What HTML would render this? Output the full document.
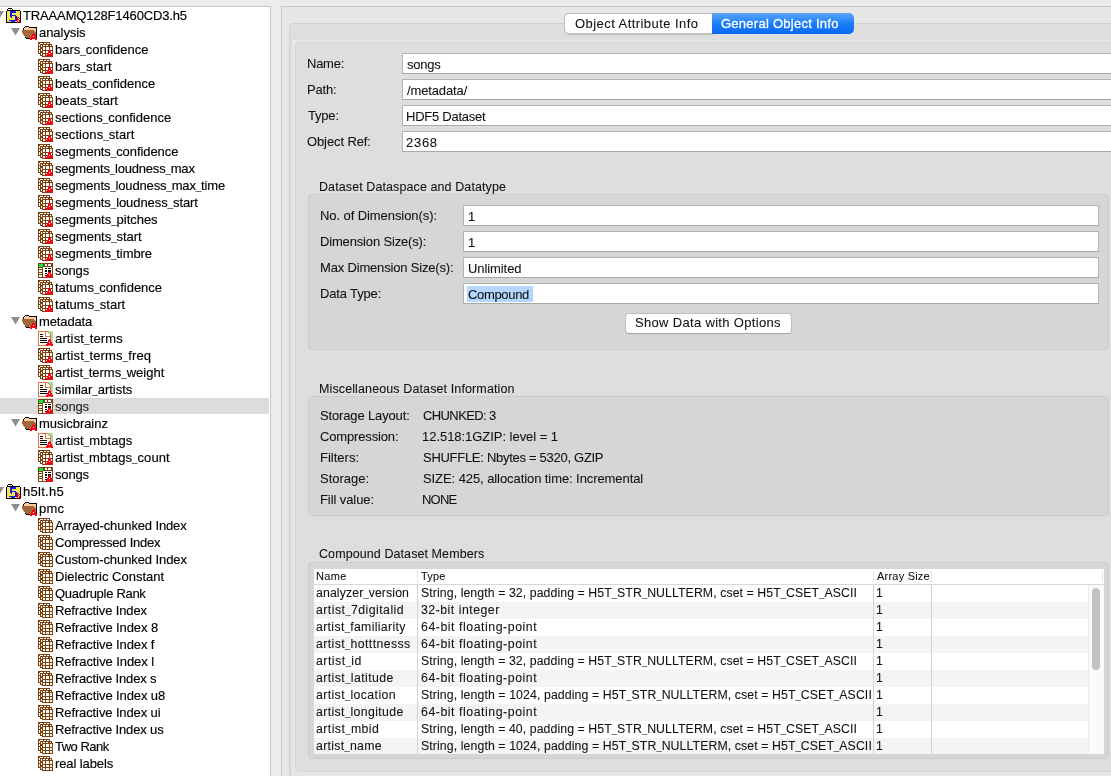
<!DOCTYPE html>
<html><head><meta charset="utf-8"><style>
*{margin:0;padding:0;box-sizing:border-box}
html,body{width:1111px;height:776px;overflow:hidden;background:#ececec;font-family:"Liberation Sans",sans-serif;color:#111;position:relative}
.t{position:absolute;white-space:pre;will-change:transform;-webkit-text-stroke:0.08px currentColor}
.ic{position:absolute}
#tree{position:absolute;left:-1px;top:6px;width:272px;height:800px;background:#fff;border:1px solid #c6c6c6;overflow:hidden}
#tree .t{color:#000;-webkit-text-stroke:0.15px #000}
.sel{position:absolute;left:0;width:269px;height:16px;background:#dcdcdc}
#rp{position:absolute;left:281px;top:6px;width:900px;height:800px;background:#e7e7e7;border:1px solid #c6c6c6}
#tabpane{position:absolute;left:289px;top:23px;width:900px;height:800px;background:#dedede;border:1px solid #d2d2d2;border-radius:4px}
#lite{position:absolute;left:292px;top:40px;width:900px;height:800px;background:#e7e7e7}
#inner{position:absolute;left:295px;top:42px;width:900px;height:730px;background:#dedede;border:1px solid #d5d5d5;border-radius:4px}
#tab1{position:absolute;left:564px;top:13px;width:150px;height:21px;background:#fff;border:1px solid #c0c0c0;border-right:none;border-radius:5px 0 0 5px;box-shadow:0 0.5px 1px rgba(0,0,0,0.12)}
#tab2{position:absolute;left:712px;top:13px;width:142px;height:21px;background:linear-gradient(#5fa5f8,#1a7ef8 50%,#0868f6);border-radius:0 5px 5px 0}
.fld{position:absolute;height:21px;background:#fff;border:1px solid #b4b4b4;border-bottom-color:#a8a8a8}
.grp{position:absolute;background:#d6d6d6;border:1px solid #cbcbcb;border-radius:4px}
#btn{position:absolute;left:625px;top:313px;width:167px;height:21px;background:#fff;border:1px solid #bdbdbd;border-bottom-color:#a4a4a4;border-radius:4px}
#tbl{position:absolute;width:790px;height:185px;background:#fff;overflow:hidden}
</style></head>
<body>
<div id="tree"><div class="sel" style="top:391px"></div><svg class="ic" style="left:5px;top:0px" width="16" height="16" viewBox="0 0 16 16" shape-rendering="crispEdges"><path fill="#000000" d="M3 1h4v1h-4zM2 2h1v1h-1zM7 2h1v1h-1zM2 3h13v1h-13zM1 4h1v1h-1zM15 4h1v1h-1zM1 5h1v1h-1zM15 5h1v1h-1zM1 6h1v1h-1zM15 6h1v1h-1zM1 7h1v1h-1zM15 7h1v1h-1zM1 8h1v1h-1zM15 8h1v1h-1zM1 9h1v1h-1zM15 9h1v1h-1zM1 10h1v1h-1zM15 10h1v1h-1zM1 11h1v1h-1zM15 11h1v1h-1zM1 12h1v1h-1zM15 12h1v1h-1zM1 13h1v1h-1zM15 13h1v1h-1zM1 14h1v1h-1zM15 14h1v1h-1zM1 15h11v1h-11zM13 15h2v1h-2z"/><path fill="#ffffff" d="M3 2h4v1h-4z"/><path fill="#fce24c" d="M2 4h3v1h-3zM11 4h4v1h-4zM2 5h3v1h-3zM11 5h4v1h-4zM2 6h3v1h-3zM7 6h8v1h-8zM2 7h3v1h-3zM7 7h8v1h-8zM2 8h3v1h-3zM11 8h4v1h-4zM2 9h3v1h-3zM7 9h3v1h-3zM12 9h3v1h-3zM2 10h4v1h-4zM7 10h3v1h-3zM14 10h1v1h-1zM2 11h8v1h-8zM13 11h1v1h-1zM2 12h8v1h-8zM14 12h1v1h-1zM2 13h2v1h-2zM13 13h1v1h-1zM2 14h4v1h-4zM10 14h2v1h-2zM13 14h1v1h-1z"/><path fill="#0a1ef0" d="M5 4h6v1h-6zM5 5h6v1h-6zM5 6h2v1h-2zM5 7h2v1h-2zM5 8h6v1h-6zM5 9h2v1h-2zM10 9h2v1h-2zM6 10h1v1h-1zM10 10h2v1h-2zM10 11h2v1h-2zM10 12h2v1h-2zM4 13h8v1h-8zM6 14h4v1h-4z"/><path fill="#ff0014" d="M12 10h2v1h-2zM12 11h1v1h-1zM14 11h1v1h-1zM12 12h2v1h-2zM12 13h1v1h-1zM14 13h1v1h-1zM12 14h1v1h-1zM14 14h1v1h-1zM12 15h1v1h-1zM15 15h1v1h-1z"/></svg><svg class="ic" style="left:-5.0px;top:4px" width="9" height="8" viewBox="0 0 9 8"><path d="M0 0H9L4.5 7.5Z" fill="#8e8e8e"/></svg><svg class="ic" style="left:21px;top:17px" width="16" height="16" viewBox="0 0 16 16" shape-rendering="crispEdges"><path fill="#000000" d="M4 2h4v1h-4zM3 3h1v1h-1zM8 3h8v1h-8zM2 4h1v1h-1zM15 4h1v1h-1zM2 5h1v1h-1zM15 5h1v1h-1zM15 6h1v1h-1zM15 7h1v1h-1zM15 8h1v1h-1zM15 9h1v1h-1zM15 10h1v1h-1zM15 11h1v1h-1zM15 12h1v1h-1zM4 13h1v1h-1zM15 13h1v1h-1zM5 14h4v1h-4z"/><path fill="#fccc9c" d="M4 3h4v1h-4zM3 4h12v1h-12zM3 5h12v1h-12zM13 6h2v1h-2zM14 7h1v1h-1z"/><path fill="#a4673c" d="M1 6h12v1h-12zM1 7h13v1h-13zM1 8h14v1h-14zM2 9h10v1h-10zM13 9h2v1h-2zM2 10h9v1h-9zM14 10h1v1h-1zM3 11h8v1h-8zM14 11h1v1h-1zM4 12h6v1h-6zM5 13h5v1h-5z"/><path fill="#ff0014" d="M12 9h1v1h-1zM11 10h3v1h-3zM11 11h3v1h-3zM10 12h2v1h-2zM13 12h2v1h-2zM10 13h5v1h-5zM9 14h7v1h-7zM9 15h2v1h-2zM14 15h2v1h-2z"/><path fill="#ffffff" d="M12 12h1v1h-1z"/></svg><svg class="ic" style="left:11.0px;top:21px" width="9" height="8" viewBox="0 0 9 8"><path d="M0 0H9L4.5 7.5Z" fill="#8e8e8e"/></svg><svg class="ic" style="left:37px;top:34px" width="16" height="16" viewBox="0 0 16 16" shape-rendering="crispEdges"><path fill="#7b4210" d="M1 1h12v1h-12zM1 2h2v1h-2zM6 2h1v1h-1zM9 2h1v1h-1zM12 2h1v1h-1zM1 3h1v1h-1zM3 3h12v1h-12zM1 4h1v1h-1zM3 4h1v1h-1zM5 4h1v1h-1zM8 4h1v1h-1zM11 4h2v1h-2zM14 4h1v1h-1zM1 5h3v1h-3zM5 5h11v1h-11zM1 6h1v1h-1zM3 6h3v1h-3zM8 6h1v1h-1zM12 6h1v1h-1zM15 6h1v1h-1zM1 7h1v1h-1zM3 7h3v1h-3zM8 7h1v1h-1zM12 7h1v1h-1zM15 7h1v1h-1zM1 8h3v1h-3zM5 8h1v1h-1zM8 8h1v1h-1zM12 8h1v1h-1zM15 8h1v1h-1zM1 9h1v1h-1zM3 9h1v1h-1zM5 9h7v1h-7zM13 9h3v1h-3zM1 10h1v1h-1zM3 10h3v1h-3zM8 10h1v1h-1zM15 10h1v1h-1zM1 11h1v1h-1zM3 11h3v1h-3zM8 11h1v1h-1zM15 11h1v1h-1zM1 12h3v1h-3zM5 12h5v1h-5zM15 12h1v1h-1zM3 13h1v1h-1zM5 13h1v1h-1zM8 13h1v1h-1zM15 13h1v1h-1zM3 14h3v1h-3zM8 14h1v1h-1zM5 15h4v1h-4zM11 15h3v1h-3z"/><path fill="#ffffff" d="M3 2h3v1h-3zM7 2h2v1h-2zM10 2h2v1h-2zM2 3h1v1h-1zM2 4h1v1h-1zM4 4h1v1h-1zM6 4h2v1h-2zM9 4h2v1h-2zM13 4h1v1h-1zM4 5h1v1h-1zM2 6h1v1h-1zM6 6h2v1h-2zM9 6h3v1h-3zM13 6h2v1h-2zM2 7h1v1h-1zM6 7h2v1h-2zM9 7h3v1h-3zM13 7h2v1h-2zM4 8h1v1h-1zM6 8h2v1h-2zM9 8h3v1h-3zM13 8h2v1h-2zM2 9h1v1h-1zM4 9h1v1h-1zM2 10h1v1h-1zM6 10h2v1h-2zM9 10h2v1h-2zM14 10h1v1h-1zM2 11h1v1h-1zM6 11h2v1h-2zM9 11h2v1h-2zM14 11h1v1h-1zM4 12h1v1h-1zM12 12h1v1h-1zM4 13h1v1h-1zM6 13h2v1h-2zM9 13h1v1h-1zM6 14h2v1h-2z"/><path fill="#ff0014" d="M12 9h1v1h-1zM11 10h3v1h-3zM11 11h3v1h-3zM10 12h2v1h-2zM13 12h2v1h-2zM10 13h5v1h-5zM9 14h7v1h-7zM9 15h2v1h-2zM14 15h2v1h-2z"/></svg><svg class="ic" style="left:37px;top:51px" width="16" height="16" viewBox="0 0 16 16" shape-rendering="crispEdges"><path fill="#7b4210" d="M1 1h12v1h-12zM1 2h2v1h-2zM6 2h1v1h-1zM9 2h1v1h-1zM12 2h1v1h-1zM1 3h1v1h-1zM3 3h12v1h-12zM1 4h1v1h-1zM3 4h1v1h-1zM5 4h1v1h-1zM8 4h1v1h-1zM11 4h2v1h-2zM14 4h1v1h-1zM1 5h3v1h-3zM5 5h11v1h-11zM1 6h1v1h-1zM3 6h3v1h-3zM8 6h1v1h-1zM12 6h1v1h-1zM15 6h1v1h-1zM1 7h1v1h-1zM3 7h3v1h-3zM8 7h1v1h-1zM12 7h1v1h-1zM15 7h1v1h-1zM1 8h3v1h-3zM5 8h1v1h-1zM8 8h1v1h-1zM12 8h1v1h-1zM15 8h1v1h-1zM1 9h1v1h-1zM3 9h1v1h-1zM5 9h7v1h-7zM13 9h3v1h-3zM1 10h1v1h-1zM3 10h3v1h-3zM8 10h1v1h-1zM15 10h1v1h-1zM1 11h1v1h-1zM3 11h3v1h-3zM8 11h1v1h-1zM15 11h1v1h-1zM1 12h3v1h-3zM5 12h5v1h-5zM15 12h1v1h-1zM3 13h1v1h-1zM5 13h1v1h-1zM8 13h1v1h-1zM15 13h1v1h-1zM3 14h3v1h-3zM8 14h1v1h-1zM5 15h4v1h-4zM11 15h3v1h-3z"/><path fill="#ffffff" d="M3 2h3v1h-3zM7 2h2v1h-2zM10 2h2v1h-2zM2 3h1v1h-1zM2 4h1v1h-1zM4 4h1v1h-1zM6 4h2v1h-2zM9 4h2v1h-2zM13 4h1v1h-1zM4 5h1v1h-1zM2 6h1v1h-1zM6 6h2v1h-2zM9 6h3v1h-3zM13 6h2v1h-2zM2 7h1v1h-1zM6 7h2v1h-2zM9 7h3v1h-3zM13 7h2v1h-2zM4 8h1v1h-1zM6 8h2v1h-2zM9 8h3v1h-3zM13 8h2v1h-2zM2 9h1v1h-1zM4 9h1v1h-1zM2 10h1v1h-1zM6 10h2v1h-2zM9 10h2v1h-2zM14 10h1v1h-1zM2 11h1v1h-1zM6 11h2v1h-2zM9 11h2v1h-2zM14 11h1v1h-1zM4 12h1v1h-1zM12 12h1v1h-1zM4 13h1v1h-1zM6 13h2v1h-2zM9 13h1v1h-1zM6 14h2v1h-2z"/><path fill="#ff0014" d="M12 9h1v1h-1zM11 10h3v1h-3zM11 11h3v1h-3zM10 12h2v1h-2zM13 12h2v1h-2zM10 13h5v1h-5zM9 14h7v1h-7zM9 15h2v1h-2zM14 15h2v1h-2z"/></svg><svg class="ic" style="left:37px;top:68px" width="16" height="16" viewBox="0 0 16 16" shape-rendering="crispEdges"><path fill="#7b4210" d="M1 1h12v1h-12zM1 2h2v1h-2zM6 2h1v1h-1zM9 2h1v1h-1zM12 2h1v1h-1zM1 3h1v1h-1zM3 3h12v1h-12zM1 4h1v1h-1zM3 4h1v1h-1zM5 4h1v1h-1zM8 4h1v1h-1zM11 4h2v1h-2zM14 4h1v1h-1zM1 5h3v1h-3zM5 5h11v1h-11zM1 6h1v1h-1zM3 6h3v1h-3zM8 6h1v1h-1zM12 6h1v1h-1zM15 6h1v1h-1zM1 7h1v1h-1zM3 7h3v1h-3zM8 7h1v1h-1zM12 7h1v1h-1zM15 7h1v1h-1zM1 8h3v1h-3zM5 8h1v1h-1zM8 8h1v1h-1zM12 8h1v1h-1zM15 8h1v1h-1zM1 9h1v1h-1zM3 9h1v1h-1zM5 9h7v1h-7zM13 9h3v1h-3zM1 10h1v1h-1zM3 10h3v1h-3zM8 10h1v1h-1zM15 10h1v1h-1zM1 11h1v1h-1zM3 11h3v1h-3zM8 11h1v1h-1zM15 11h1v1h-1zM1 12h3v1h-3zM5 12h5v1h-5zM15 12h1v1h-1zM3 13h1v1h-1zM5 13h1v1h-1zM8 13h1v1h-1zM15 13h1v1h-1zM3 14h3v1h-3zM8 14h1v1h-1zM5 15h4v1h-4zM11 15h3v1h-3z"/><path fill="#ffffff" d="M3 2h3v1h-3zM7 2h2v1h-2zM10 2h2v1h-2zM2 3h1v1h-1zM2 4h1v1h-1zM4 4h1v1h-1zM6 4h2v1h-2zM9 4h2v1h-2zM13 4h1v1h-1zM4 5h1v1h-1zM2 6h1v1h-1zM6 6h2v1h-2zM9 6h3v1h-3zM13 6h2v1h-2zM2 7h1v1h-1zM6 7h2v1h-2zM9 7h3v1h-3zM13 7h2v1h-2zM4 8h1v1h-1zM6 8h2v1h-2zM9 8h3v1h-3zM13 8h2v1h-2zM2 9h1v1h-1zM4 9h1v1h-1zM2 10h1v1h-1zM6 10h2v1h-2zM9 10h2v1h-2zM14 10h1v1h-1zM2 11h1v1h-1zM6 11h2v1h-2zM9 11h2v1h-2zM14 11h1v1h-1zM4 12h1v1h-1zM12 12h1v1h-1zM4 13h1v1h-1zM6 13h2v1h-2zM9 13h1v1h-1zM6 14h2v1h-2z"/><path fill="#ff0014" d="M12 9h1v1h-1zM11 10h3v1h-3zM11 11h3v1h-3zM10 12h2v1h-2zM13 12h2v1h-2zM10 13h5v1h-5zM9 14h7v1h-7zM9 15h2v1h-2zM14 15h2v1h-2z"/></svg><svg class="ic" style="left:37px;top:85px" width="16" height="16" viewBox="0 0 16 16" shape-rendering="crispEdges"><path fill="#7b4210" d="M1 1h12v1h-12zM1 2h2v1h-2zM6 2h1v1h-1zM9 2h1v1h-1zM12 2h1v1h-1zM1 3h1v1h-1zM3 3h12v1h-12zM1 4h1v1h-1zM3 4h1v1h-1zM5 4h1v1h-1zM8 4h1v1h-1zM11 4h2v1h-2zM14 4h1v1h-1zM1 5h3v1h-3zM5 5h11v1h-11zM1 6h1v1h-1zM3 6h3v1h-3zM8 6h1v1h-1zM12 6h1v1h-1zM15 6h1v1h-1zM1 7h1v1h-1zM3 7h3v1h-3zM8 7h1v1h-1zM12 7h1v1h-1zM15 7h1v1h-1zM1 8h3v1h-3zM5 8h1v1h-1zM8 8h1v1h-1zM12 8h1v1h-1zM15 8h1v1h-1zM1 9h1v1h-1zM3 9h1v1h-1zM5 9h7v1h-7zM13 9h3v1h-3zM1 10h1v1h-1zM3 10h3v1h-3zM8 10h1v1h-1zM15 10h1v1h-1zM1 11h1v1h-1zM3 11h3v1h-3zM8 11h1v1h-1zM15 11h1v1h-1zM1 12h3v1h-3zM5 12h5v1h-5zM15 12h1v1h-1zM3 13h1v1h-1zM5 13h1v1h-1zM8 13h1v1h-1zM15 13h1v1h-1zM3 14h3v1h-3zM8 14h1v1h-1zM5 15h4v1h-4zM11 15h3v1h-3z"/><path fill="#ffffff" d="M3 2h3v1h-3zM7 2h2v1h-2zM10 2h2v1h-2zM2 3h1v1h-1zM2 4h1v1h-1zM4 4h1v1h-1zM6 4h2v1h-2zM9 4h2v1h-2zM13 4h1v1h-1zM4 5h1v1h-1zM2 6h1v1h-1zM6 6h2v1h-2zM9 6h3v1h-3zM13 6h2v1h-2zM2 7h1v1h-1zM6 7h2v1h-2zM9 7h3v1h-3zM13 7h2v1h-2zM4 8h1v1h-1zM6 8h2v1h-2zM9 8h3v1h-3zM13 8h2v1h-2zM2 9h1v1h-1zM4 9h1v1h-1zM2 10h1v1h-1zM6 10h2v1h-2zM9 10h2v1h-2zM14 10h1v1h-1zM2 11h1v1h-1zM6 11h2v1h-2zM9 11h2v1h-2zM14 11h1v1h-1zM4 12h1v1h-1zM12 12h1v1h-1zM4 13h1v1h-1zM6 13h2v1h-2zM9 13h1v1h-1zM6 14h2v1h-2z"/><path fill="#ff0014" d="M12 9h1v1h-1zM11 10h3v1h-3zM11 11h3v1h-3zM10 12h2v1h-2zM13 12h2v1h-2zM10 13h5v1h-5zM9 14h7v1h-7zM9 15h2v1h-2zM14 15h2v1h-2z"/></svg><svg class="ic" style="left:37px;top:102px" width="16" height="16" viewBox="0 0 16 16" shape-rendering="crispEdges"><path fill="#7b4210" d="M1 1h12v1h-12zM1 2h2v1h-2zM6 2h1v1h-1zM9 2h1v1h-1zM12 2h1v1h-1zM1 3h1v1h-1zM3 3h12v1h-12zM1 4h1v1h-1zM3 4h1v1h-1zM5 4h1v1h-1zM8 4h1v1h-1zM11 4h2v1h-2zM14 4h1v1h-1zM1 5h3v1h-3zM5 5h11v1h-11zM1 6h1v1h-1zM3 6h3v1h-3zM8 6h1v1h-1zM12 6h1v1h-1zM15 6h1v1h-1zM1 7h1v1h-1zM3 7h3v1h-3zM8 7h1v1h-1zM12 7h1v1h-1zM15 7h1v1h-1zM1 8h3v1h-3zM5 8h1v1h-1zM8 8h1v1h-1zM12 8h1v1h-1zM15 8h1v1h-1zM1 9h1v1h-1zM3 9h1v1h-1zM5 9h7v1h-7zM13 9h3v1h-3zM1 10h1v1h-1zM3 10h3v1h-3zM8 10h1v1h-1zM15 10h1v1h-1zM1 11h1v1h-1zM3 11h3v1h-3zM8 11h1v1h-1zM15 11h1v1h-1zM1 12h3v1h-3zM5 12h5v1h-5zM15 12h1v1h-1zM3 13h1v1h-1zM5 13h1v1h-1zM8 13h1v1h-1zM15 13h1v1h-1zM3 14h3v1h-3zM8 14h1v1h-1zM5 15h4v1h-4zM11 15h3v1h-3z"/><path fill="#ffffff" d="M3 2h3v1h-3zM7 2h2v1h-2zM10 2h2v1h-2zM2 3h1v1h-1zM2 4h1v1h-1zM4 4h1v1h-1zM6 4h2v1h-2zM9 4h2v1h-2zM13 4h1v1h-1zM4 5h1v1h-1zM2 6h1v1h-1zM6 6h2v1h-2zM9 6h3v1h-3zM13 6h2v1h-2zM2 7h1v1h-1zM6 7h2v1h-2zM9 7h3v1h-3zM13 7h2v1h-2zM4 8h1v1h-1zM6 8h2v1h-2zM9 8h3v1h-3zM13 8h2v1h-2zM2 9h1v1h-1zM4 9h1v1h-1zM2 10h1v1h-1zM6 10h2v1h-2zM9 10h2v1h-2zM14 10h1v1h-1zM2 11h1v1h-1zM6 11h2v1h-2zM9 11h2v1h-2zM14 11h1v1h-1zM4 12h1v1h-1zM12 12h1v1h-1zM4 13h1v1h-1zM6 13h2v1h-2zM9 13h1v1h-1zM6 14h2v1h-2z"/><path fill="#ff0014" d="M12 9h1v1h-1zM11 10h3v1h-3zM11 11h3v1h-3zM10 12h2v1h-2zM13 12h2v1h-2zM10 13h5v1h-5zM9 14h7v1h-7zM9 15h2v1h-2zM14 15h2v1h-2z"/></svg><svg class="ic" style="left:37px;top:119px" width="16" height="16" viewBox="0 0 16 16" shape-rendering="crispEdges"><path fill="#7b4210" d="M1 1h12v1h-12zM1 2h2v1h-2zM6 2h1v1h-1zM9 2h1v1h-1zM12 2h1v1h-1zM1 3h1v1h-1zM3 3h12v1h-12zM1 4h1v1h-1zM3 4h1v1h-1zM5 4h1v1h-1zM8 4h1v1h-1zM11 4h2v1h-2zM14 4h1v1h-1zM1 5h3v1h-3zM5 5h11v1h-11zM1 6h1v1h-1zM3 6h3v1h-3zM8 6h1v1h-1zM12 6h1v1h-1zM15 6h1v1h-1zM1 7h1v1h-1zM3 7h3v1h-3zM8 7h1v1h-1zM12 7h1v1h-1zM15 7h1v1h-1zM1 8h3v1h-3zM5 8h1v1h-1zM8 8h1v1h-1zM12 8h1v1h-1zM15 8h1v1h-1zM1 9h1v1h-1zM3 9h1v1h-1zM5 9h7v1h-7zM13 9h3v1h-3zM1 10h1v1h-1zM3 10h3v1h-3zM8 10h1v1h-1zM15 10h1v1h-1zM1 11h1v1h-1zM3 11h3v1h-3zM8 11h1v1h-1zM15 11h1v1h-1zM1 12h3v1h-3zM5 12h5v1h-5zM15 12h1v1h-1zM3 13h1v1h-1zM5 13h1v1h-1zM8 13h1v1h-1zM15 13h1v1h-1zM3 14h3v1h-3zM8 14h1v1h-1zM5 15h4v1h-4zM11 15h3v1h-3z"/><path fill="#ffffff" d="M3 2h3v1h-3zM7 2h2v1h-2zM10 2h2v1h-2zM2 3h1v1h-1zM2 4h1v1h-1zM4 4h1v1h-1zM6 4h2v1h-2zM9 4h2v1h-2zM13 4h1v1h-1zM4 5h1v1h-1zM2 6h1v1h-1zM6 6h2v1h-2zM9 6h3v1h-3zM13 6h2v1h-2zM2 7h1v1h-1zM6 7h2v1h-2zM9 7h3v1h-3zM13 7h2v1h-2zM4 8h1v1h-1zM6 8h2v1h-2zM9 8h3v1h-3zM13 8h2v1h-2zM2 9h1v1h-1zM4 9h1v1h-1zM2 10h1v1h-1zM6 10h2v1h-2zM9 10h2v1h-2zM14 10h1v1h-1zM2 11h1v1h-1zM6 11h2v1h-2zM9 11h2v1h-2zM14 11h1v1h-1zM4 12h1v1h-1zM12 12h1v1h-1zM4 13h1v1h-1zM6 13h2v1h-2zM9 13h1v1h-1zM6 14h2v1h-2z"/><path fill="#ff0014" d="M12 9h1v1h-1zM11 10h3v1h-3zM11 11h3v1h-3zM10 12h2v1h-2zM13 12h2v1h-2zM10 13h5v1h-5zM9 14h7v1h-7zM9 15h2v1h-2zM14 15h2v1h-2z"/></svg><svg class="ic" style="left:37px;top:136px" width="16" height="16" viewBox="0 0 16 16" shape-rendering="crispEdges"><path fill="#7b4210" d="M1 1h12v1h-12zM1 2h2v1h-2zM6 2h1v1h-1zM9 2h1v1h-1zM12 2h1v1h-1zM1 3h1v1h-1zM3 3h12v1h-12zM1 4h1v1h-1zM3 4h1v1h-1zM5 4h1v1h-1zM8 4h1v1h-1zM11 4h2v1h-2zM14 4h1v1h-1zM1 5h3v1h-3zM5 5h11v1h-11zM1 6h1v1h-1zM3 6h3v1h-3zM8 6h1v1h-1zM12 6h1v1h-1zM15 6h1v1h-1zM1 7h1v1h-1zM3 7h3v1h-3zM8 7h1v1h-1zM12 7h1v1h-1zM15 7h1v1h-1zM1 8h3v1h-3zM5 8h1v1h-1zM8 8h1v1h-1zM12 8h1v1h-1zM15 8h1v1h-1zM1 9h1v1h-1zM3 9h1v1h-1zM5 9h7v1h-7zM13 9h3v1h-3zM1 10h1v1h-1zM3 10h3v1h-3zM8 10h1v1h-1zM15 10h1v1h-1zM1 11h1v1h-1zM3 11h3v1h-3zM8 11h1v1h-1zM15 11h1v1h-1zM1 12h3v1h-3zM5 12h5v1h-5zM15 12h1v1h-1zM3 13h1v1h-1zM5 13h1v1h-1zM8 13h1v1h-1zM15 13h1v1h-1zM3 14h3v1h-3zM8 14h1v1h-1zM5 15h4v1h-4zM11 15h3v1h-3z"/><path fill="#ffffff" d="M3 2h3v1h-3zM7 2h2v1h-2zM10 2h2v1h-2zM2 3h1v1h-1zM2 4h1v1h-1zM4 4h1v1h-1zM6 4h2v1h-2zM9 4h2v1h-2zM13 4h1v1h-1zM4 5h1v1h-1zM2 6h1v1h-1zM6 6h2v1h-2zM9 6h3v1h-3zM13 6h2v1h-2zM2 7h1v1h-1zM6 7h2v1h-2zM9 7h3v1h-3zM13 7h2v1h-2zM4 8h1v1h-1zM6 8h2v1h-2zM9 8h3v1h-3zM13 8h2v1h-2zM2 9h1v1h-1zM4 9h1v1h-1zM2 10h1v1h-1zM6 10h2v1h-2zM9 10h2v1h-2zM14 10h1v1h-1zM2 11h1v1h-1zM6 11h2v1h-2zM9 11h2v1h-2zM14 11h1v1h-1zM4 12h1v1h-1zM12 12h1v1h-1zM4 13h1v1h-1zM6 13h2v1h-2zM9 13h1v1h-1zM6 14h2v1h-2z"/><path fill="#ff0014" d="M12 9h1v1h-1zM11 10h3v1h-3zM11 11h3v1h-3zM10 12h2v1h-2zM13 12h2v1h-2zM10 13h5v1h-5zM9 14h7v1h-7zM9 15h2v1h-2zM14 15h2v1h-2z"/></svg><svg class="ic" style="left:37px;top:153px" width="16" height="16" viewBox="0 0 16 16" shape-rendering="crispEdges"><path fill="#7b4210" d="M1 1h12v1h-12zM1 2h2v1h-2zM6 2h1v1h-1zM9 2h1v1h-1zM12 2h1v1h-1zM1 3h1v1h-1zM3 3h12v1h-12zM1 4h1v1h-1zM3 4h1v1h-1zM5 4h1v1h-1zM8 4h1v1h-1zM11 4h2v1h-2zM14 4h1v1h-1zM1 5h3v1h-3zM5 5h11v1h-11zM1 6h1v1h-1zM3 6h3v1h-3zM8 6h1v1h-1zM12 6h1v1h-1zM15 6h1v1h-1zM1 7h1v1h-1zM3 7h3v1h-3zM8 7h1v1h-1zM12 7h1v1h-1zM15 7h1v1h-1zM1 8h3v1h-3zM5 8h1v1h-1zM8 8h1v1h-1zM12 8h1v1h-1zM15 8h1v1h-1zM1 9h1v1h-1zM3 9h1v1h-1zM5 9h7v1h-7zM13 9h3v1h-3zM1 10h1v1h-1zM3 10h3v1h-3zM8 10h1v1h-1zM15 10h1v1h-1zM1 11h1v1h-1zM3 11h3v1h-3zM8 11h1v1h-1zM15 11h1v1h-1zM1 12h3v1h-3zM5 12h5v1h-5zM15 12h1v1h-1zM3 13h1v1h-1zM5 13h1v1h-1zM8 13h1v1h-1zM15 13h1v1h-1zM3 14h3v1h-3zM8 14h1v1h-1zM5 15h4v1h-4zM11 15h3v1h-3z"/><path fill="#ffffff" d="M3 2h3v1h-3zM7 2h2v1h-2zM10 2h2v1h-2zM2 3h1v1h-1zM2 4h1v1h-1zM4 4h1v1h-1zM6 4h2v1h-2zM9 4h2v1h-2zM13 4h1v1h-1zM4 5h1v1h-1zM2 6h1v1h-1zM6 6h2v1h-2zM9 6h3v1h-3zM13 6h2v1h-2zM2 7h1v1h-1zM6 7h2v1h-2zM9 7h3v1h-3zM13 7h2v1h-2zM4 8h1v1h-1zM6 8h2v1h-2zM9 8h3v1h-3zM13 8h2v1h-2zM2 9h1v1h-1zM4 9h1v1h-1zM2 10h1v1h-1zM6 10h2v1h-2zM9 10h2v1h-2zM14 10h1v1h-1zM2 11h1v1h-1zM6 11h2v1h-2zM9 11h2v1h-2zM14 11h1v1h-1zM4 12h1v1h-1zM12 12h1v1h-1zM4 13h1v1h-1zM6 13h2v1h-2zM9 13h1v1h-1zM6 14h2v1h-2z"/><path fill="#ff0014" d="M12 9h1v1h-1zM11 10h3v1h-3zM11 11h3v1h-3zM10 12h2v1h-2zM13 12h2v1h-2zM10 13h5v1h-5zM9 14h7v1h-7zM9 15h2v1h-2zM14 15h2v1h-2z"/></svg><svg class="ic" style="left:37px;top:170px" width="16" height="16" viewBox="0 0 16 16" shape-rendering="crispEdges"><path fill="#7b4210" d="M1 1h12v1h-12zM1 2h2v1h-2zM6 2h1v1h-1zM9 2h1v1h-1zM12 2h1v1h-1zM1 3h1v1h-1zM3 3h12v1h-12zM1 4h1v1h-1zM3 4h1v1h-1zM5 4h1v1h-1zM8 4h1v1h-1zM11 4h2v1h-2zM14 4h1v1h-1zM1 5h3v1h-3zM5 5h11v1h-11zM1 6h1v1h-1zM3 6h3v1h-3zM8 6h1v1h-1zM12 6h1v1h-1zM15 6h1v1h-1zM1 7h1v1h-1zM3 7h3v1h-3zM8 7h1v1h-1zM12 7h1v1h-1zM15 7h1v1h-1zM1 8h3v1h-3zM5 8h1v1h-1zM8 8h1v1h-1zM12 8h1v1h-1zM15 8h1v1h-1zM1 9h1v1h-1zM3 9h1v1h-1zM5 9h7v1h-7zM13 9h3v1h-3zM1 10h1v1h-1zM3 10h3v1h-3zM8 10h1v1h-1zM15 10h1v1h-1zM1 11h1v1h-1zM3 11h3v1h-3zM8 11h1v1h-1zM15 11h1v1h-1zM1 12h3v1h-3zM5 12h5v1h-5zM15 12h1v1h-1zM3 13h1v1h-1zM5 13h1v1h-1zM8 13h1v1h-1zM15 13h1v1h-1zM3 14h3v1h-3zM8 14h1v1h-1zM5 15h4v1h-4zM11 15h3v1h-3z"/><path fill="#ffffff" d="M3 2h3v1h-3zM7 2h2v1h-2zM10 2h2v1h-2zM2 3h1v1h-1zM2 4h1v1h-1zM4 4h1v1h-1zM6 4h2v1h-2zM9 4h2v1h-2zM13 4h1v1h-1zM4 5h1v1h-1zM2 6h1v1h-1zM6 6h2v1h-2zM9 6h3v1h-3zM13 6h2v1h-2zM2 7h1v1h-1zM6 7h2v1h-2zM9 7h3v1h-3zM13 7h2v1h-2zM4 8h1v1h-1zM6 8h2v1h-2zM9 8h3v1h-3zM13 8h2v1h-2zM2 9h1v1h-1zM4 9h1v1h-1zM2 10h1v1h-1zM6 10h2v1h-2zM9 10h2v1h-2zM14 10h1v1h-1zM2 11h1v1h-1zM6 11h2v1h-2zM9 11h2v1h-2zM14 11h1v1h-1zM4 12h1v1h-1zM12 12h1v1h-1zM4 13h1v1h-1zM6 13h2v1h-2zM9 13h1v1h-1zM6 14h2v1h-2z"/><path fill="#ff0014" d="M12 9h1v1h-1zM11 10h3v1h-3zM11 11h3v1h-3zM10 12h2v1h-2zM13 12h2v1h-2zM10 13h5v1h-5zM9 14h7v1h-7zM9 15h2v1h-2zM14 15h2v1h-2z"/></svg><svg class="ic" style="left:37px;top:187px" width="16" height="16" viewBox="0 0 16 16" shape-rendering="crispEdges"><path fill="#7b4210" d="M1 1h12v1h-12zM1 2h2v1h-2zM6 2h1v1h-1zM9 2h1v1h-1zM12 2h1v1h-1zM1 3h1v1h-1zM3 3h12v1h-12zM1 4h1v1h-1zM3 4h1v1h-1zM5 4h1v1h-1zM8 4h1v1h-1zM11 4h2v1h-2zM14 4h1v1h-1zM1 5h3v1h-3zM5 5h11v1h-11zM1 6h1v1h-1zM3 6h3v1h-3zM8 6h1v1h-1zM12 6h1v1h-1zM15 6h1v1h-1zM1 7h1v1h-1zM3 7h3v1h-3zM8 7h1v1h-1zM12 7h1v1h-1zM15 7h1v1h-1zM1 8h3v1h-3zM5 8h1v1h-1zM8 8h1v1h-1zM12 8h1v1h-1zM15 8h1v1h-1zM1 9h1v1h-1zM3 9h1v1h-1zM5 9h7v1h-7zM13 9h3v1h-3zM1 10h1v1h-1zM3 10h3v1h-3zM8 10h1v1h-1zM15 10h1v1h-1zM1 11h1v1h-1zM3 11h3v1h-3zM8 11h1v1h-1zM15 11h1v1h-1zM1 12h3v1h-3zM5 12h5v1h-5zM15 12h1v1h-1zM3 13h1v1h-1zM5 13h1v1h-1zM8 13h1v1h-1zM15 13h1v1h-1zM3 14h3v1h-3zM8 14h1v1h-1zM5 15h4v1h-4zM11 15h3v1h-3z"/><path fill="#ffffff" d="M3 2h3v1h-3zM7 2h2v1h-2zM10 2h2v1h-2zM2 3h1v1h-1zM2 4h1v1h-1zM4 4h1v1h-1zM6 4h2v1h-2zM9 4h2v1h-2zM13 4h1v1h-1zM4 5h1v1h-1zM2 6h1v1h-1zM6 6h2v1h-2zM9 6h3v1h-3zM13 6h2v1h-2zM2 7h1v1h-1zM6 7h2v1h-2zM9 7h3v1h-3zM13 7h2v1h-2zM4 8h1v1h-1zM6 8h2v1h-2zM9 8h3v1h-3zM13 8h2v1h-2zM2 9h1v1h-1zM4 9h1v1h-1zM2 10h1v1h-1zM6 10h2v1h-2zM9 10h2v1h-2zM14 10h1v1h-1zM2 11h1v1h-1zM6 11h2v1h-2zM9 11h2v1h-2zM14 11h1v1h-1zM4 12h1v1h-1zM12 12h1v1h-1zM4 13h1v1h-1zM6 13h2v1h-2zM9 13h1v1h-1zM6 14h2v1h-2z"/><path fill="#ff0014" d="M12 9h1v1h-1zM11 10h3v1h-3zM11 11h3v1h-3zM10 12h2v1h-2zM13 12h2v1h-2zM10 13h5v1h-5zM9 14h7v1h-7zM9 15h2v1h-2zM14 15h2v1h-2z"/></svg><svg class="ic" style="left:37px;top:204px" width="16" height="16" viewBox="0 0 16 16" shape-rendering="crispEdges"><path fill="#7b4210" d="M1 1h12v1h-12zM1 2h2v1h-2zM6 2h1v1h-1zM9 2h1v1h-1zM12 2h1v1h-1zM1 3h1v1h-1zM3 3h12v1h-12zM1 4h1v1h-1zM3 4h1v1h-1zM5 4h1v1h-1zM8 4h1v1h-1zM11 4h2v1h-2zM14 4h1v1h-1zM1 5h3v1h-3zM5 5h11v1h-11zM1 6h1v1h-1zM3 6h3v1h-3zM8 6h1v1h-1zM12 6h1v1h-1zM15 6h1v1h-1zM1 7h1v1h-1zM3 7h3v1h-3zM8 7h1v1h-1zM12 7h1v1h-1zM15 7h1v1h-1zM1 8h3v1h-3zM5 8h1v1h-1zM8 8h1v1h-1zM12 8h1v1h-1zM15 8h1v1h-1zM1 9h1v1h-1zM3 9h1v1h-1zM5 9h7v1h-7zM13 9h3v1h-3zM1 10h1v1h-1zM3 10h3v1h-3zM8 10h1v1h-1zM15 10h1v1h-1zM1 11h1v1h-1zM3 11h3v1h-3zM8 11h1v1h-1zM15 11h1v1h-1zM1 12h3v1h-3zM5 12h5v1h-5zM15 12h1v1h-1zM3 13h1v1h-1zM5 13h1v1h-1zM8 13h1v1h-1zM15 13h1v1h-1zM3 14h3v1h-3zM8 14h1v1h-1zM5 15h4v1h-4zM11 15h3v1h-3z"/><path fill="#ffffff" d="M3 2h3v1h-3zM7 2h2v1h-2zM10 2h2v1h-2zM2 3h1v1h-1zM2 4h1v1h-1zM4 4h1v1h-1zM6 4h2v1h-2zM9 4h2v1h-2zM13 4h1v1h-1zM4 5h1v1h-1zM2 6h1v1h-1zM6 6h2v1h-2zM9 6h3v1h-3zM13 6h2v1h-2zM2 7h1v1h-1zM6 7h2v1h-2zM9 7h3v1h-3zM13 7h2v1h-2zM4 8h1v1h-1zM6 8h2v1h-2zM9 8h3v1h-3zM13 8h2v1h-2zM2 9h1v1h-1zM4 9h1v1h-1zM2 10h1v1h-1zM6 10h2v1h-2zM9 10h2v1h-2zM14 10h1v1h-1zM2 11h1v1h-1zM6 11h2v1h-2zM9 11h2v1h-2zM14 11h1v1h-1zM4 12h1v1h-1zM12 12h1v1h-1zM4 13h1v1h-1zM6 13h2v1h-2zM9 13h1v1h-1zM6 14h2v1h-2z"/><path fill="#ff0014" d="M12 9h1v1h-1zM11 10h3v1h-3zM11 11h3v1h-3zM10 12h2v1h-2zM13 12h2v1h-2zM10 13h5v1h-5zM9 14h7v1h-7zM9 15h2v1h-2zM14 15h2v1h-2z"/></svg><svg class="ic" style="left:37px;top:221px" width="16" height="16" viewBox="0 0 16 16" shape-rendering="crispEdges"><path fill="#7b4210" d="M1 1h12v1h-12zM1 2h2v1h-2zM6 2h1v1h-1zM9 2h1v1h-1zM12 2h1v1h-1zM1 3h1v1h-1zM3 3h12v1h-12zM1 4h1v1h-1zM3 4h1v1h-1zM5 4h1v1h-1zM8 4h1v1h-1zM11 4h2v1h-2zM14 4h1v1h-1zM1 5h3v1h-3zM5 5h11v1h-11zM1 6h1v1h-1zM3 6h3v1h-3zM8 6h1v1h-1zM12 6h1v1h-1zM15 6h1v1h-1zM1 7h1v1h-1zM3 7h3v1h-3zM8 7h1v1h-1zM12 7h1v1h-1zM15 7h1v1h-1zM1 8h3v1h-3zM5 8h1v1h-1zM8 8h1v1h-1zM12 8h1v1h-1zM15 8h1v1h-1zM1 9h1v1h-1zM3 9h1v1h-1zM5 9h7v1h-7zM13 9h3v1h-3zM1 10h1v1h-1zM3 10h3v1h-3zM8 10h1v1h-1zM15 10h1v1h-1zM1 11h1v1h-1zM3 11h3v1h-3zM8 11h1v1h-1zM15 11h1v1h-1zM1 12h3v1h-3zM5 12h5v1h-5zM15 12h1v1h-1zM3 13h1v1h-1zM5 13h1v1h-1zM8 13h1v1h-1zM15 13h1v1h-1zM3 14h3v1h-3zM8 14h1v1h-1zM5 15h4v1h-4zM11 15h3v1h-3z"/><path fill="#ffffff" d="M3 2h3v1h-3zM7 2h2v1h-2zM10 2h2v1h-2zM2 3h1v1h-1zM2 4h1v1h-1zM4 4h1v1h-1zM6 4h2v1h-2zM9 4h2v1h-2zM13 4h1v1h-1zM4 5h1v1h-1zM2 6h1v1h-1zM6 6h2v1h-2zM9 6h3v1h-3zM13 6h2v1h-2zM2 7h1v1h-1zM6 7h2v1h-2zM9 7h3v1h-3zM13 7h2v1h-2zM4 8h1v1h-1zM6 8h2v1h-2zM9 8h3v1h-3zM13 8h2v1h-2zM2 9h1v1h-1zM4 9h1v1h-1zM2 10h1v1h-1zM6 10h2v1h-2zM9 10h2v1h-2zM14 10h1v1h-1zM2 11h1v1h-1zM6 11h2v1h-2zM9 11h2v1h-2zM14 11h1v1h-1zM4 12h1v1h-1zM12 12h1v1h-1zM4 13h1v1h-1zM6 13h2v1h-2zM9 13h1v1h-1zM6 14h2v1h-2z"/><path fill="#ff0014" d="M12 9h1v1h-1zM11 10h3v1h-3zM11 11h3v1h-3zM10 12h2v1h-2zM13 12h2v1h-2zM10 13h5v1h-5zM9 14h7v1h-7zM9 15h2v1h-2zM14 15h2v1h-2z"/></svg><svg class="ic" style="left:37px;top:238px" width="16" height="16" viewBox="0 0 16 16" shape-rendering="crispEdges"><path fill="#7b4210" d="M1 1h12v1h-12zM1 2h2v1h-2zM6 2h1v1h-1zM9 2h1v1h-1zM12 2h1v1h-1zM1 3h1v1h-1zM3 3h12v1h-12zM1 4h1v1h-1zM3 4h1v1h-1zM5 4h1v1h-1zM8 4h1v1h-1zM11 4h2v1h-2zM14 4h1v1h-1zM1 5h3v1h-3zM5 5h11v1h-11zM1 6h1v1h-1zM3 6h3v1h-3zM8 6h1v1h-1zM12 6h1v1h-1zM15 6h1v1h-1zM1 7h1v1h-1zM3 7h3v1h-3zM8 7h1v1h-1zM12 7h1v1h-1zM15 7h1v1h-1zM1 8h3v1h-3zM5 8h1v1h-1zM8 8h1v1h-1zM12 8h1v1h-1zM15 8h1v1h-1zM1 9h1v1h-1zM3 9h1v1h-1zM5 9h7v1h-7zM13 9h3v1h-3zM1 10h1v1h-1zM3 10h3v1h-3zM8 10h1v1h-1zM15 10h1v1h-1zM1 11h1v1h-1zM3 11h3v1h-3zM8 11h1v1h-1zM15 11h1v1h-1zM1 12h3v1h-3zM5 12h5v1h-5zM15 12h1v1h-1zM3 13h1v1h-1zM5 13h1v1h-1zM8 13h1v1h-1zM15 13h1v1h-1zM3 14h3v1h-3zM8 14h1v1h-1zM5 15h4v1h-4zM11 15h3v1h-3z"/><path fill="#ffffff" d="M3 2h3v1h-3zM7 2h2v1h-2zM10 2h2v1h-2zM2 3h1v1h-1zM2 4h1v1h-1zM4 4h1v1h-1zM6 4h2v1h-2zM9 4h2v1h-2zM13 4h1v1h-1zM4 5h1v1h-1zM2 6h1v1h-1zM6 6h2v1h-2zM9 6h3v1h-3zM13 6h2v1h-2zM2 7h1v1h-1zM6 7h2v1h-2zM9 7h3v1h-3zM13 7h2v1h-2zM4 8h1v1h-1zM6 8h2v1h-2zM9 8h3v1h-3zM13 8h2v1h-2zM2 9h1v1h-1zM4 9h1v1h-1zM2 10h1v1h-1zM6 10h2v1h-2zM9 10h2v1h-2zM14 10h1v1h-1zM2 11h1v1h-1zM6 11h2v1h-2zM9 11h2v1h-2zM14 11h1v1h-1zM4 12h1v1h-1zM12 12h1v1h-1zM4 13h1v1h-1zM6 13h2v1h-2zM9 13h1v1h-1zM6 14h2v1h-2z"/><path fill="#ff0014" d="M12 9h1v1h-1zM11 10h3v1h-3zM11 11h3v1h-3zM10 12h2v1h-2zM13 12h2v1h-2zM10 13h5v1h-5zM9 14h7v1h-7zM9 15h2v1h-2zM14 15h2v1h-2z"/></svg><svg class="ic" style="left:37px;top:255px" width="16" height="16" viewBox="0 0 16 16" shape-rendering="crispEdges"><path fill="#7b4210" d="M1 1h15v1h-15zM1 2h1v1h-1zM6 2h2v1h-2zM10 2h1v1h-1zM14 2h2v1h-2zM1 3h1v1h-1zM6 3h2v1h-2zM10 3h1v1h-1zM14 3h2v1h-2zM1 4h1v1h-1zM6 4h10v1h-10zM1 5h5v1h-5zM15 5h1v1h-1zM1 6h1v1h-1zM5 6h1v1h-1zM15 6h1v1h-1zM1 7h5v1h-5zM15 7h1v1h-1zM1 8h1v1h-1zM5 8h1v1h-1zM15 8h1v1h-1zM1 9h1v1h-1zM5 9h1v1h-1zM15 9h1v1h-1zM1 10h5v1h-5zM15 10h1v1h-1zM1 11h1v1h-1zM5 11h1v1h-1zM15 11h1v1h-1zM1 12h5v1h-5zM15 12h1v1h-1zM1 13h1v1h-1zM5 13h1v1h-1zM15 13h1v1h-1zM1 14h1v1h-1zM5 14h1v1h-1zM1 15h8v1h-8zM11 15h3v1h-3z"/><path fill="#00f040" d="M2 2h4v1h-4zM2 3h4v1h-4zM2 4h4v1h-4z"/><path fill="#ffffff" d="M8 2h2v1h-2zM11 2h3v1h-3zM8 3h2v1h-2zM11 3h3v1h-3zM6 5h9v1h-9zM2 6h3v1h-3zM6 6h2v1h-2zM10 6h1v1h-1zM14 6h1v1h-1zM6 7h9v1h-9zM2 8h3v1h-3zM6 8h2v1h-2zM10 8h1v1h-1zM14 8h1v1h-1zM2 9h3v1h-3zM6 9h2v1h-2zM10 9h1v1h-1zM14 9h1v1h-1zM6 10h5v1h-5zM14 10h1v1h-1zM2 11h3v1h-3zM6 11h2v1h-2zM10 11h1v1h-1zM14 11h1v1h-1zM6 12h4v1h-4zM12 12h1v1h-1zM2 13h3v1h-3zM6 13h2v1h-2zM2 14h3v1h-3zM6 14h3v1h-3z"/><path fill="#000000" d="M8 6h2v1h-2zM11 6h3v1h-3zM8 8h2v1h-2zM11 8h3v1h-3zM8 9h2v1h-2zM11 9h1v1h-1zM13 9h1v1h-1zM8 11h2v1h-2zM8 13h2v1h-2z"/><path fill="#ff0014" d="M12 9h1v1h-1zM11 10h3v1h-3zM11 11h3v1h-3zM10 12h2v1h-2zM13 12h2v1h-2zM10 13h5v1h-5zM9 14h7v1h-7zM9 15h2v1h-2zM14 15h2v1h-2z"/></svg><svg class="ic" style="left:37px;top:272px" width="16" height="16" viewBox="0 0 16 16" shape-rendering="crispEdges"><path fill="#7b4210" d="M1 1h12v1h-12zM1 2h2v1h-2zM6 2h1v1h-1zM9 2h1v1h-1zM12 2h1v1h-1zM1 3h1v1h-1zM3 3h12v1h-12zM1 4h1v1h-1zM3 4h1v1h-1zM5 4h1v1h-1zM8 4h1v1h-1zM11 4h2v1h-2zM14 4h1v1h-1zM1 5h3v1h-3zM5 5h11v1h-11zM1 6h1v1h-1zM3 6h3v1h-3zM8 6h1v1h-1zM12 6h1v1h-1zM15 6h1v1h-1zM1 7h1v1h-1zM3 7h3v1h-3zM8 7h1v1h-1zM12 7h1v1h-1zM15 7h1v1h-1zM1 8h3v1h-3zM5 8h1v1h-1zM8 8h1v1h-1zM12 8h1v1h-1zM15 8h1v1h-1zM1 9h1v1h-1zM3 9h1v1h-1zM5 9h7v1h-7zM13 9h3v1h-3zM1 10h1v1h-1zM3 10h3v1h-3zM8 10h1v1h-1zM15 10h1v1h-1zM1 11h1v1h-1zM3 11h3v1h-3zM8 11h1v1h-1zM15 11h1v1h-1zM1 12h3v1h-3zM5 12h5v1h-5zM15 12h1v1h-1zM3 13h1v1h-1zM5 13h1v1h-1zM8 13h1v1h-1zM15 13h1v1h-1zM3 14h3v1h-3zM8 14h1v1h-1zM5 15h4v1h-4zM11 15h3v1h-3z"/><path fill="#ffffff" d="M3 2h3v1h-3zM7 2h2v1h-2zM10 2h2v1h-2zM2 3h1v1h-1zM2 4h1v1h-1zM4 4h1v1h-1zM6 4h2v1h-2zM9 4h2v1h-2zM13 4h1v1h-1zM4 5h1v1h-1zM2 6h1v1h-1zM6 6h2v1h-2zM9 6h3v1h-3zM13 6h2v1h-2zM2 7h1v1h-1zM6 7h2v1h-2zM9 7h3v1h-3zM13 7h2v1h-2zM4 8h1v1h-1zM6 8h2v1h-2zM9 8h3v1h-3zM13 8h2v1h-2zM2 9h1v1h-1zM4 9h1v1h-1zM2 10h1v1h-1zM6 10h2v1h-2zM9 10h2v1h-2zM14 10h1v1h-1zM2 11h1v1h-1zM6 11h2v1h-2zM9 11h2v1h-2zM14 11h1v1h-1zM4 12h1v1h-1zM12 12h1v1h-1zM4 13h1v1h-1zM6 13h2v1h-2zM9 13h1v1h-1zM6 14h2v1h-2z"/><path fill="#ff0014" d="M12 9h1v1h-1zM11 10h3v1h-3zM11 11h3v1h-3zM10 12h2v1h-2zM13 12h2v1h-2zM10 13h5v1h-5zM9 14h7v1h-7zM9 15h2v1h-2zM14 15h2v1h-2z"/></svg><svg class="ic" style="left:37px;top:289px" width="16" height="16" viewBox="0 0 16 16" shape-rendering="crispEdges"><path fill="#7b4210" d="M1 1h12v1h-12zM1 2h2v1h-2zM6 2h1v1h-1zM9 2h1v1h-1zM12 2h1v1h-1zM1 3h1v1h-1zM3 3h12v1h-12zM1 4h1v1h-1zM3 4h1v1h-1zM5 4h1v1h-1zM8 4h1v1h-1zM11 4h2v1h-2zM14 4h1v1h-1zM1 5h3v1h-3zM5 5h11v1h-11zM1 6h1v1h-1zM3 6h3v1h-3zM8 6h1v1h-1zM12 6h1v1h-1zM15 6h1v1h-1zM1 7h1v1h-1zM3 7h3v1h-3zM8 7h1v1h-1zM12 7h1v1h-1zM15 7h1v1h-1zM1 8h3v1h-3zM5 8h1v1h-1zM8 8h1v1h-1zM12 8h1v1h-1zM15 8h1v1h-1zM1 9h1v1h-1zM3 9h1v1h-1zM5 9h7v1h-7zM13 9h3v1h-3zM1 10h1v1h-1zM3 10h3v1h-3zM8 10h1v1h-1zM15 10h1v1h-1zM1 11h1v1h-1zM3 11h3v1h-3zM8 11h1v1h-1zM15 11h1v1h-1zM1 12h3v1h-3zM5 12h5v1h-5zM15 12h1v1h-1zM3 13h1v1h-1zM5 13h1v1h-1zM8 13h1v1h-1zM15 13h1v1h-1zM3 14h3v1h-3zM8 14h1v1h-1zM5 15h4v1h-4zM11 15h3v1h-3z"/><path fill="#ffffff" d="M3 2h3v1h-3zM7 2h2v1h-2zM10 2h2v1h-2zM2 3h1v1h-1zM2 4h1v1h-1zM4 4h1v1h-1zM6 4h2v1h-2zM9 4h2v1h-2zM13 4h1v1h-1zM4 5h1v1h-1zM2 6h1v1h-1zM6 6h2v1h-2zM9 6h3v1h-3zM13 6h2v1h-2zM2 7h1v1h-1zM6 7h2v1h-2zM9 7h3v1h-3zM13 7h2v1h-2zM4 8h1v1h-1zM6 8h2v1h-2zM9 8h3v1h-3zM13 8h2v1h-2zM2 9h1v1h-1zM4 9h1v1h-1zM2 10h1v1h-1zM6 10h2v1h-2zM9 10h2v1h-2zM14 10h1v1h-1zM2 11h1v1h-1zM6 11h2v1h-2zM9 11h2v1h-2zM14 11h1v1h-1zM4 12h1v1h-1zM12 12h1v1h-1zM4 13h1v1h-1zM6 13h2v1h-2zM9 13h1v1h-1zM6 14h2v1h-2z"/><path fill="#ff0014" d="M12 9h1v1h-1zM11 10h3v1h-3zM11 11h3v1h-3zM10 12h2v1h-2zM13 12h2v1h-2zM10 13h5v1h-5zM9 14h7v1h-7zM9 15h2v1h-2zM14 15h2v1h-2z"/></svg><svg class="ic" style="left:21px;top:306px" width="16" height="16" viewBox="0 0 16 16" shape-rendering="crispEdges"><path fill="#000000" d="M4 2h4v1h-4zM3 3h1v1h-1zM8 3h8v1h-8zM2 4h1v1h-1zM15 4h1v1h-1zM2 5h1v1h-1zM15 5h1v1h-1zM15 6h1v1h-1zM15 7h1v1h-1zM15 8h1v1h-1zM15 9h1v1h-1zM15 10h1v1h-1zM15 11h1v1h-1zM15 12h1v1h-1zM4 13h1v1h-1zM15 13h1v1h-1zM5 14h4v1h-4z"/><path fill="#fccc9c" d="M4 3h4v1h-4zM3 4h12v1h-12zM3 5h12v1h-12zM13 6h2v1h-2zM14 7h1v1h-1z"/><path fill="#a4673c" d="M1 6h12v1h-12zM1 7h13v1h-13zM1 8h14v1h-14zM2 9h10v1h-10zM13 9h2v1h-2zM2 10h9v1h-9zM14 10h1v1h-1zM3 11h8v1h-8zM14 11h1v1h-1zM4 12h6v1h-6zM5 13h5v1h-5z"/><path fill="#ff0014" d="M12 9h1v1h-1zM11 10h3v1h-3zM11 11h3v1h-3zM10 12h2v1h-2zM13 12h2v1h-2zM10 13h5v1h-5zM9 14h7v1h-7zM9 15h2v1h-2zM14 15h2v1h-2z"/><path fill="#ffffff" d="M12 12h1v1h-1z"/></svg><svg class="ic" style="left:11.0px;top:310px" width="9" height="8" viewBox="0 0 9 8"><path d="M0 0H9L4.5 7.5Z" fill="#8e8e8e"/></svg><svg class="ic" style="left:37px;top:323px" width="16" height="16" viewBox="0 0 16 16" shape-rendering="crispEdges"><path fill="#dc7440" d="M1 1h10v1h-10zM1 2h1v1h-1zM8 2h1v1h-1zM11 2h1v1h-1zM1 3h1v1h-1zM8 3h1v1h-1zM12 3h1v1h-1zM1 4h1v1h-1zM8 4h1v1h-1zM13 4h1v1h-1zM1 5h1v1h-1zM8 5h1v1h-1zM13 5h1v1h-1zM1 6h1v1h-1zM8 6h6v1h-6zM1 7h1v1h-1zM13 7h1v1h-1zM1 8h1v1h-1zM13 8h1v1h-1zM1 9h1v1h-1zM13 9h1v1h-1zM1 10h1v1h-1zM1 11h1v1h-1zM1 12h1v1h-1zM1 13h1v1h-1zM1 14h1v1h-1zM1 15h8v1h-8zM11 15h3v1h-3z"/><path fill="#a6dea0" d="M11 1h5v1h-5zM12 2h4v1h-4zM13 3h3v1h-3zM14 4h2v1h-2zM14 5h2v1h-2zM14 6h2v1h-2zM14 7h2v1h-2zM14 8h2v1h-2zM14 9h2v1h-2zM14 10h2v1h-2zM14 11h2v1h-2zM15 12h1v1h-1zM15 13h1v1h-1z"/><path fill="#ffffff" d="M2 2h6v1h-6zM9 2h2v1h-2zM2 3h6v1h-6zM9 3h3v1h-3zM2 4h1v1h-1zM6 4h2v1h-2zM9 4h4v1h-4zM2 5h6v1h-6zM9 5h4v1h-4zM2 6h1v1h-1zM6 6h2v1h-2zM2 7h11v1h-11zM2 8h1v1h-1zM10 8h3v1h-3zM2 9h10v1h-10zM2 10h1v1h-1zM10 10h1v1h-1zM2 11h9v1h-9zM2 12h1v1h-1zM12 12h1v1h-1zM2 13h8v1h-8zM2 14h7v1h-7z"/><path fill="#000000" d="M3 4h3v1h-3zM3 6h3v1h-3zM3 8h7v1h-7zM3 10h7v1h-7zM3 12h7v1h-7z"/><path fill="#ff0014" d="M12 9h1v1h-1zM11 10h3v1h-3zM11 11h3v1h-3zM10 12h2v1h-2zM13 12h2v1h-2zM10 13h5v1h-5zM9 14h7v1h-7zM9 15h2v1h-2zM14 15h2v1h-2z"/></svg><svg class="ic" style="left:37px;top:340px" width="16" height="16" viewBox="0 0 16 16" shape-rendering="crispEdges"><path fill="#7b4210" d="M1 1h12v1h-12zM1 2h2v1h-2zM6 2h1v1h-1zM9 2h1v1h-1zM12 2h1v1h-1zM1 3h1v1h-1zM3 3h12v1h-12zM1 4h1v1h-1zM3 4h1v1h-1zM5 4h1v1h-1zM8 4h1v1h-1zM11 4h2v1h-2zM14 4h1v1h-1zM1 5h3v1h-3zM5 5h11v1h-11zM1 6h1v1h-1zM3 6h3v1h-3zM8 6h1v1h-1zM12 6h1v1h-1zM15 6h1v1h-1zM1 7h1v1h-1zM3 7h3v1h-3zM8 7h1v1h-1zM12 7h1v1h-1zM15 7h1v1h-1zM1 8h3v1h-3zM5 8h1v1h-1zM8 8h1v1h-1zM12 8h1v1h-1zM15 8h1v1h-1zM1 9h1v1h-1zM3 9h1v1h-1zM5 9h7v1h-7zM13 9h3v1h-3zM1 10h1v1h-1zM3 10h3v1h-3zM8 10h1v1h-1zM15 10h1v1h-1zM1 11h1v1h-1zM3 11h3v1h-3zM8 11h1v1h-1zM15 11h1v1h-1zM1 12h3v1h-3zM5 12h5v1h-5zM15 12h1v1h-1zM3 13h1v1h-1zM5 13h1v1h-1zM8 13h1v1h-1zM15 13h1v1h-1zM3 14h3v1h-3zM8 14h1v1h-1zM5 15h4v1h-4zM11 15h3v1h-3z"/><path fill="#ffffff" d="M3 2h3v1h-3zM7 2h2v1h-2zM10 2h2v1h-2zM2 3h1v1h-1zM2 4h1v1h-1zM4 4h1v1h-1zM6 4h2v1h-2zM9 4h2v1h-2zM13 4h1v1h-1zM4 5h1v1h-1zM2 6h1v1h-1zM6 6h2v1h-2zM9 6h3v1h-3zM13 6h2v1h-2zM2 7h1v1h-1zM6 7h2v1h-2zM9 7h3v1h-3zM13 7h2v1h-2zM4 8h1v1h-1zM6 8h2v1h-2zM9 8h3v1h-3zM13 8h2v1h-2zM2 9h1v1h-1zM4 9h1v1h-1zM2 10h1v1h-1zM6 10h2v1h-2zM9 10h2v1h-2zM14 10h1v1h-1zM2 11h1v1h-1zM6 11h2v1h-2zM9 11h2v1h-2zM14 11h1v1h-1zM4 12h1v1h-1zM12 12h1v1h-1zM4 13h1v1h-1zM6 13h2v1h-2zM9 13h1v1h-1zM6 14h2v1h-2z"/><path fill="#ff0014" d="M12 9h1v1h-1zM11 10h3v1h-3zM11 11h3v1h-3zM10 12h2v1h-2zM13 12h2v1h-2zM10 13h5v1h-5zM9 14h7v1h-7zM9 15h2v1h-2zM14 15h2v1h-2z"/></svg><svg class="ic" style="left:37px;top:357px" width="16" height="16" viewBox="0 0 16 16" shape-rendering="crispEdges"><path fill="#7b4210" d="M1 1h12v1h-12zM1 2h2v1h-2zM6 2h1v1h-1zM9 2h1v1h-1zM12 2h1v1h-1zM1 3h1v1h-1zM3 3h12v1h-12zM1 4h1v1h-1zM3 4h1v1h-1zM5 4h1v1h-1zM8 4h1v1h-1zM11 4h2v1h-2zM14 4h1v1h-1zM1 5h3v1h-3zM5 5h11v1h-11zM1 6h1v1h-1zM3 6h3v1h-3zM8 6h1v1h-1zM12 6h1v1h-1zM15 6h1v1h-1zM1 7h1v1h-1zM3 7h3v1h-3zM8 7h1v1h-1zM12 7h1v1h-1zM15 7h1v1h-1zM1 8h3v1h-3zM5 8h1v1h-1zM8 8h1v1h-1zM12 8h1v1h-1zM15 8h1v1h-1zM1 9h1v1h-1zM3 9h1v1h-1zM5 9h7v1h-7zM13 9h3v1h-3zM1 10h1v1h-1zM3 10h3v1h-3zM8 10h1v1h-1zM15 10h1v1h-1zM1 11h1v1h-1zM3 11h3v1h-3zM8 11h1v1h-1zM15 11h1v1h-1zM1 12h3v1h-3zM5 12h5v1h-5zM15 12h1v1h-1zM3 13h1v1h-1zM5 13h1v1h-1zM8 13h1v1h-1zM15 13h1v1h-1zM3 14h3v1h-3zM8 14h1v1h-1zM5 15h4v1h-4zM11 15h3v1h-3z"/><path fill="#ffffff" d="M3 2h3v1h-3zM7 2h2v1h-2zM10 2h2v1h-2zM2 3h1v1h-1zM2 4h1v1h-1zM4 4h1v1h-1zM6 4h2v1h-2zM9 4h2v1h-2zM13 4h1v1h-1zM4 5h1v1h-1zM2 6h1v1h-1zM6 6h2v1h-2zM9 6h3v1h-3zM13 6h2v1h-2zM2 7h1v1h-1zM6 7h2v1h-2zM9 7h3v1h-3zM13 7h2v1h-2zM4 8h1v1h-1zM6 8h2v1h-2zM9 8h3v1h-3zM13 8h2v1h-2zM2 9h1v1h-1zM4 9h1v1h-1zM2 10h1v1h-1zM6 10h2v1h-2zM9 10h2v1h-2zM14 10h1v1h-1zM2 11h1v1h-1zM6 11h2v1h-2zM9 11h2v1h-2zM14 11h1v1h-1zM4 12h1v1h-1zM12 12h1v1h-1zM4 13h1v1h-1zM6 13h2v1h-2zM9 13h1v1h-1zM6 14h2v1h-2z"/><path fill="#ff0014" d="M12 9h1v1h-1zM11 10h3v1h-3zM11 11h3v1h-3zM10 12h2v1h-2zM13 12h2v1h-2zM10 13h5v1h-5zM9 14h7v1h-7zM9 15h2v1h-2zM14 15h2v1h-2z"/></svg><svg class="ic" style="left:37px;top:374px" width="16" height="16" viewBox="0 0 16 16" shape-rendering="crispEdges"><path fill="#dc7440" d="M1 1h10v1h-10zM1 2h1v1h-1zM8 2h1v1h-1zM11 2h1v1h-1zM1 3h1v1h-1zM8 3h1v1h-1zM12 3h1v1h-1zM1 4h1v1h-1zM8 4h1v1h-1zM13 4h1v1h-1zM1 5h1v1h-1zM8 5h1v1h-1zM13 5h1v1h-1zM1 6h1v1h-1zM8 6h6v1h-6zM1 7h1v1h-1zM13 7h1v1h-1zM1 8h1v1h-1zM13 8h1v1h-1zM1 9h1v1h-1zM13 9h1v1h-1zM1 10h1v1h-1zM1 11h1v1h-1zM1 12h1v1h-1zM1 13h1v1h-1zM1 14h1v1h-1zM1 15h8v1h-8zM11 15h3v1h-3z"/><path fill="#a6dea0" d="M11 1h5v1h-5zM12 2h4v1h-4zM13 3h3v1h-3zM14 4h2v1h-2zM14 5h2v1h-2zM14 6h2v1h-2zM14 7h2v1h-2zM14 8h2v1h-2zM14 9h2v1h-2zM14 10h2v1h-2zM14 11h2v1h-2zM15 12h1v1h-1zM15 13h1v1h-1z"/><path fill="#ffffff" d="M2 2h6v1h-6zM9 2h2v1h-2zM2 3h6v1h-6zM9 3h3v1h-3zM2 4h1v1h-1zM6 4h2v1h-2zM9 4h4v1h-4zM2 5h6v1h-6zM9 5h4v1h-4zM2 6h1v1h-1zM6 6h2v1h-2zM2 7h11v1h-11zM2 8h1v1h-1zM10 8h3v1h-3zM2 9h10v1h-10zM2 10h1v1h-1zM10 10h1v1h-1zM2 11h9v1h-9zM2 12h1v1h-1zM12 12h1v1h-1zM2 13h8v1h-8zM2 14h7v1h-7z"/><path fill="#000000" d="M3 4h3v1h-3zM3 6h3v1h-3zM3 8h7v1h-7zM3 10h7v1h-7zM3 12h7v1h-7z"/><path fill="#ff0014" d="M12 9h1v1h-1zM11 10h3v1h-3zM11 11h3v1h-3zM10 12h2v1h-2zM13 12h2v1h-2zM10 13h5v1h-5zM9 14h7v1h-7zM9 15h2v1h-2zM14 15h2v1h-2z"/></svg><svg class="ic" style="left:37px;top:391px" width="16" height="16" viewBox="0 0 16 16" shape-rendering="crispEdges"><path fill="#7b4210" d="M1 1h15v1h-15zM1 2h1v1h-1zM6 2h2v1h-2zM10 2h1v1h-1zM14 2h2v1h-2zM1 3h1v1h-1zM6 3h2v1h-2zM10 3h1v1h-1zM14 3h2v1h-2zM1 4h1v1h-1zM6 4h10v1h-10zM1 5h5v1h-5zM15 5h1v1h-1zM1 6h1v1h-1zM5 6h1v1h-1zM15 6h1v1h-1zM1 7h5v1h-5zM15 7h1v1h-1zM1 8h1v1h-1zM5 8h1v1h-1zM15 8h1v1h-1zM1 9h1v1h-1zM5 9h1v1h-1zM15 9h1v1h-1zM1 10h5v1h-5zM15 10h1v1h-1zM1 11h1v1h-1zM5 11h1v1h-1zM15 11h1v1h-1zM1 12h5v1h-5zM15 12h1v1h-1zM1 13h1v1h-1zM5 13h1v1h-1zM15 13h1v1h-1zM1 14h1v1h-1zM5 14h1v1h-1zM1 15h8v1h-8zM11 15h3v1h-3z"/><path fill="#00f040" d="M2 2h4v1h-4zM2 3h4v1h-4zM2 4h4v1h-4z"/><path fill="#ffffff" d="M8 2h2v1h-2zM11 2h3v1h-3zM8 3h2v1h-2zM11 3h3v1h-3zM6 5h9v1h-9zM2 6h3v1h-3zM6 6h2v1h-2zM10 6h1v1h-1zM14 6h1v1h-1zM6 7h9v1h-9zM2 8h3v1h-3zM6 8h2v1h-2zM10 8h1v1h-1zM14 8h1v1h-1zM2 9h3v1h-3zM6 9h2v1h-2zM10 9h1v1h-1zM14 9h1v1h-1zM6 10h5v1h-5zM14 10h1v1h-1zM2 11h3v1h-3zM6 11h2v1h-2zM10 11h1v1h-1zM14 11h1v1h-1zM6 12h4v1h-4zM12 12h1v1h-1zM2 13h3v1h-3zM6 13h2v1h-2zM2 14h3v1h-3zM6 14h3v1h-3z"/><path fill="#000000" d="M8 6h2v1h-2zM11 6h3v1h-3zM8 8h2v1h-2zM11 8h3v1h-3zM8 9h2v1h-2zM11 9h1v1h-1zM13 9h1v1h-1zM8 11h2v1h-2zM8 13h2v1h-2z"/><path fill="#ff0014" d="M12 9h1v1h-1zM11 10h3v1h-3zM11 11h3v1h-3zM10 12h2v1h-2zM13 12h2v1h-2zM10 13h5v1h-5zM9 14h7v1h-7zM9 15h2v1h-2zM14 15h2v1h-2z"/></svg><svg class="ic" style="left:21px;top:408px" width="16" height="16" viewBox="0 0 16 16" shape-rendering="crispEdges"><path fill="#000000" d="M4 2h4v1h-4zM3 3h1v1h-1zM8 3h8v1h-8zM2 4h1v1h-1zM15 4h1v1h-1zM2 5h1v1h-1zM15 5h1v1h-1zM15 6h1v1h-1zM15 7h1v1h-1zM15 8h1v1h-1zM15 9h1v1h-1zM15 10h1v1h-1zM15 11h1v1h-1zM15 12h1v1h-1zM4 13h1v1h-1zM15 13h1v1h-1zM5 14h4v1h-4z"/><path fill="#fccc9c" d="M4 3h4v1h-4zM3 4h12v1h-12zM3 5h12v1h-12zM13 6h2v1h-2zM14 7h1v1h-1z"/><path fill="#a4673c" d="M1 6h12v1h-12zM1 7h13v1h-13zM1 8h14v1h-14zM2 9h10v1h-10zM13 9h2v1h-2zM2 10h9v1h-9zM14 10h1v1h-1zM3 11h8v1h-8zM14 11h1v1h-1zM4 12h6v1h-6zM5 13h5v1h-5z"/><path fill="#ff0014" d="M12 9h1v1h-1zM11 10h3v1h-3zM11 11h3v1h-3zM10 12h2v1h-2zM13 12h2v1h-2zM10 13h5v1h-5zM9 14h7v1h-7zM9 15h2v1h-2zM14 15h2v1h-2z"/><path fill="#ffffff" d="M12 12h1v1h-1z"/></svg><svg class="ic" style="left:11.0px;top:412px" width="9" height="8" viewBox="0 0 9 8"><path d="M0 0H9L4.5 7.5Z" fill="#8e8e8e"/></svg><svg class="ic" style="left:37px;top:425px" width="16" height="16" viewBox="0 0 16 16" shape-rendering="crispEdges"><path fill="#dc7440" d="M1 1h10v1h-10zM1 2h1v1h-1zM8 2h1v1h-1zM11 2h1v1h-1zM1 3h1v1h-1zM8 3h1v1h-1zM12 3h1v1h-1zM1 4h1v1h-1zM8 4h1v1h-1zM13 4h1v1h-1zM1 5h1v1h-1zM8 5h1v1h-1zM13 5h1v1h-1zM1 6h1v1h-1zM8 6h6v1h-6zM1 7h1v1h-1zM13 7h1v1h-1zM1 8h1v1h-1zM13 8h1v1h-1zM1 9h1v1h-1zM13 9h1v1h-1zM1 10h1v1h-1zM1 11h1v1h-1zM1 12h1v1h-1zM1 13h1v1h-1zM1 14h1v1h-1zM1 15h8v1h-8zM11 15h3v1h-3z"/><path fill="#a6dea0" d="M11 1h5v1h-5zM12 2h4v1h-4zM13 3h3v1h-3zM14 4h2v1h-2zM14 5h2v1h-2zM14 6h2v1h-2zM14 7h2v1h-2zM14 8h2v1h-2zM14 9h2v1h-2zM14 10h2v1h-2zM14 11h2v1h-2zM15 12h1v1h-1zM15 13h1v1h-1z"/><path fill="#ffffff" d="M2 2h6v1h-6zM9 2h2v1h-2zM2 3h6v1h-6zM9 3h3v1h-3zM2 4h1v1h-1zM6 4h2v1h-2zM9 4h4v1h-4zM2 5h6v1h-6zM9 5h4v1h-4zM2 6h1v1h-1zM6 6h2v1h-2zM2 7h11v1h-11zM2 8h1v1h-1zM10 8h3v1h-3zM2 9h10v1h-10zM2 10h1v1h-1zM10 10h1v1h-1zM2 11h9v1h-9zM2 12h1v1h-1zM12 12h1v1h-1zM2 13h8v1h-8zM2 14h7v1h-7z"/><path fill="#000000" d="M3 4h3v1h-3zM3 6h3v1h-3zM3 8h7v1h-7zM3 10h7v1h-7zM3 12h7v1h-7z"/><path fill="#ff0014" d="M12 9h1v1h-1zM11 10h3v1h-3zM11 11h3v1h-3zM10 12h2v1h-2zM13 12h2v1h-2zM10 13h5v1h-5zM9 14h7v1h-7zM9 15h2v1h-2zM14 15h2v1h-2z"/></svg><svg class="ic" style="left:37px;top:442px" width="16" height="16" viewBox="0 0 16 16" shape-rendering="crispEdges"><path fill="#7b4210" d="M1 1h12v1h-12zM1 2h2v1h-2zM6 2h1v1h-1zM9 2h1v1h-1zM12 2h1v1h-1zM1 3h1v1h-1zM3 3h12v1h-12zM1 4h1v1h-1zM3 4h1v1h-1zM5 4h1v1h-1zM8 4h1v1h-1zM11 4h2v1h-2zM14 4h1v1h-1zM1 5h3v1h-3zM5 5h11v1h-11zM1 6h1v1h-1zM3 6h3v1h-3zM8 6h1v1h-1zM12 6h1v1h-1zM15 6h1v1h-1zM1 7h1v1h-1zM3 7h3v1h-3zM8 7h1v1h-1zM12 7h1v1h-1zM15 7h1v1h-1zM1 8h3v1h-3zM5 8h1v1h-1zM8 8h1v1h-1zM12 8h1v1h-1zM15 8h1v1h-1zM1 9h1v1h-1zM3 9h1v1h-1zM5 9h7v1h-7zM13 9h3v1h-3zM1 10h1v1h-1zM3 10h3v1h-3zM8 10h1v1h-1zM15 10h1v1h-1zM1 11h1v1h-1zM3 11h3v1h-3zM8 11h1v1h-1zM15 11h1v1h-1zM1 12h3v1h-3zM5 12h5v1h-5zM15 12h1v1h-1zM3 13h1v1h-1zM5 13h1v1h-1zM8 13h1v1h-1zM15 13h1v1h-1zM3 14h3v1h-3zM8 14h1v1h-1zM5 15h4v1h-4zM11 15h3v1h-3z"/><path fill="#ffffff" d="M3 2h3v1h-3zM7 2h2v1h-2zM10 2h2v1h-2zM2 3h1v1h-1zM2 4h1v1h-1zM4 4h1v1h-1zM6 4h2v1h-2zM9 4h2v1h-2zM13 4h1v1h-1zM4 5h1v1h-1zM2 6h1v1h-1zM6 6h2v1h-2zM9 6h3v1h-3zM13 6h2v1h-2zM2 7h1v1h-1zM6 7h2v1h-2zM9 7h3v1h-3zM13 7h2v1h-2zM4 8h1v1h-1zM6 8h2v1h-2zM9 8h3v1h-3zM13 8h2v1h-2zM2 9h1v1h-1zM4 9h1v1h-1zM2 10h1v1h-1zM6 10h2v1h-2zM9 10h2v1h-2zM14 10h1v1h-1zM2 11h1v1h-1zM6 11h2v1h-2zM9 11h2v1h-2zM14 11h1v1h-1zM4 12h1v1h-1zM12 12h1v1h-1zM4 13h1v1h-1zM6 13h2v1h-2zM9 13h1v1h-1zM6 14h2v1h-2z"/><path fill="#ff0014" d="M12 9h1v1h-1zM11 10h3v1h-3zM11 11h3v1h-3zM10 12h2v1h-2zM13 12h2v1h-2zM10 13h5v1h-5zM9 14h7v1h-7zM9 15h2v1h-2zM14 15h2v1h-2z"/></svg><svg class="ic" style="left:37px;top:459px" width="16" height="16" viewBox="0 0 16 16" shape-rendering="crispEdges"><path fill="#7b4210" d="M1 1h15v1h-15zM1 2h1v1h-1zM6 2h2v1h-2zM10 2h1v1h-1zM14 2h2v1h-2zM1 3h1v1h-1zM6 3h2v1h-2zM10 3h1v1h-1zM14 3h2v1h-2zM1 4h1v1h-1zM6 4h10v1h-10zM1 5h5v1h-5zM15 5h1v1h-1zM1 6h1v1h-1zM5 6h1v1h-1zM15 6h1v1h-1zM1 7h5v1h-5zM15 7h1v1h-1zM1 8h1v1h-1zM5 8h1v1h-1zM15 8h1v1h-1zM1 9h1v1h-1zM5 9h1v1h-1zM15 9h1v1h-1zM1 10h5v1h-5zM15 10h1v1h-1zM1 11h1v1h-1zM5 11h1v1h-1zM15 11h1v1h-1zM1 12h5v1h-5zM15 12h1v1h-1zM1 13h1v1h-1zM5 13h1v1h-1zM15 13h1v1h-1zM1 14h1v1h-1zM5 14h1v1h-1zM1 15h8v1h-8zM11 15h3v1h-3z"/><path fill="#00f040" d="M2 2h4v1h-4zM2 3h4v1h-4zM2 4h4v1h-4z"/><path fill="#ffffff" d="M8 2h2v1h-2zM11 2h3v1h-3zM8 3h2v1h-2zM11 3h3v1h-3zM6 5h9v1h-9zM2 6h3v1h-3zM6 6h2v1h-2zM10 6h1v1h-1zM14 6h1v1h-1zM6 7h9v1h-9zM2 8h3v1h-3zM6 8h2v1h-2zM10 8h1v1h-1zM14 8h1v1h-1zM2 9h3v1h-3zM6 9h2v1h-2zM10 9h1v1h-1zM14 9h1v1h-1zM6 10h5v1h-5zM14 10h1v1h-1zM2 11h3v1h-3zM6 11h2v1h-2zM10 11h1v1h-1zM14 11h1v1h-1zM6 12h4v1h-4zM12 12h1v1h-1zM2 13h3v1h-3zM6 13h2v1h-2zM2 14h3v1h-3zM6 14h3v1h-3z"/><path fill="#000000" d="M8 6h2v1h-2zM11 6h3v1h-3zM8 8h2v1h-2zM11 8h3v1h-3zM8 9h2v1h-2zM11 9h1v1h-1zM13 9h1v1h-1zM8 11h2v1h-2zM8 13h2v1h-2z"/><path fill="#ff0014" d="M12 9h1v1h-1zM11 10h3v1h-3zM11 11h3v1h-3zM10 12h2v1h-2zM13 12h2v1h-2zM10 13h5v1h-5zM9 14h7v1h-7zM9 15h2v1h-2zM14 15h2v1h-2z"/></svg><svg class="ic" style="left:5px;top:476px" width="16" height="16" viewBox="0 0 16 16" shape-rendering="crispEdges"><path fill="#000000" d="M3 1h4v1h-4zM2 2h1v1h-1zM7 2h1v1h-1zM2 3h13v1h-13zM1 4h1v1h-1zM15 4h1v1h-1zM1 5h1v1h-1zM15 5h1v1h-1zM1 6h1v1h-1zM15 6h1v1h-1zM1 7h1v1h-1zM15 7h1v1h-1zM1 8h1v1h-1zM15 8h1v1h-1zM1 9h1v1h-1zM15 9h1v1h-1zM1 10h1v1h-1zM15 10h1v1h-1zM1 11h1v1h-1zM15 11h1v1h-1zM1 12h1v1h-1zM15 12h1v1h-1zM1 13h1v1h-1zM15 13h1v1h-1zM1 14h1v1h-1zM15 14h1v1h-1zM1 15h11v1h-11zM13 15h2v1h-2z"/><path fill="#ffffff" d="M3 2h4v1h-4z"/><path fill="#fce24c" d="M2 4h3v1h-3zM11 4h4v1h-4zM2 5h3v1h-3zM11 5h4v1h-4zM2 6h3v1h-3zM7 6h8v1h-8zM2 7h3v1h-3zM7 7h8v1h-8zM2 8h3v1h-3zM11 8h4v1h-4zM2 9h3v1h-3zM7 9h3v1h-3zM12 9h3v1h-3zM2 10h4v1h-4zM7 10h3v1h-3zM14 10h1v1h-1zM2 11h8v1h-8zM13 11h1v1h-1zM2 12h8v1h-8zM14 12h1v1h-1zM2 13h2v1h-2zM13 13h1v1h-1zM2 14h4v1h-4zM10 14h2v1h-2zM13 14h1v1h-1z"/><path fill="#0a1ef0" d="M5 4h6v1h-6zM5 5h6v1h-6zM5 6h2v1h-2zM5 7h2v1h-2zM5 8h6v1h-6zM5 9h2v1h-2zM10 9h2v1h-2zM6 10h1v1h-1zM10 10h2v1h-2zM10 11h2v1h-2zM10 12h2v1h-2zM4 13h8v1h-8zM6 14h4v1h-4z"/><path fill="#ff0014" d="M12 10h2v1h-2zM12 11h1v1h-1zM14 11h1v1h-1zM12 12h2v1h-2zM12 13h1v1h-1zM14 13h1v1h-1zM12 14h1v1h-1zM14 14h1v1h-1zM12 15h1v1h-1zM15 15h1v1h-1z"/></svg><svg class="ic" style="left:-5.0px;top:480px" width="9" height="8" viewBox="0 0 9 8"><path d="M0 0H9L4.5 7.5Z" fill="#8e8e8e"/></svg><svg class="ic" style="left:21px;top:493px" width="16" height="16" viewBox="0 0 16 16" shape-rendering="crispEdges"><path fill="#000000" d="M4 2h4v1h-4zM3 3h1v1h-1zM8 3h8v1h-8zM2 4h1v1h-1zM15 4h1v1h-1zM2 5h1v1h-1zM15 5h1v1h-1zM15 6h1v1h-1zM15 7h1v1h-1zM15 8h1v1h-1zM15 9h1v1h-1zM15 10h1v1h-1zM15 11h1v1h-1zM15 12h1v1h-1zM4 13h1v1h-1zM15 13h1v1h-1zM5 14h4v1h-4z"/><path fill="#fccc9c" d="M4 3h4v1h-4zM3 4h12v1h-12zM3 5h12v1h-12zM13 6h2v1h-2zM14 7h1v1h-1z"/><path fill="#a4673c" d="M1 6h12v1h-12zM1 7h13v1h-13zM1 8h14v1h-14zM2 9h10v1h-10zM13 9h2v1h-2zM2 10h9v1h-9zM14 10h1v1h-1zM3 11h8v1h-8zM14 11h1v1h-1zM4 12h6v1h-6zM5 13h5v1h-5z"/><path fill="#ff0014" d="M12 9h1v1h-1zM11 10h3v1h-3zM11 11h3v1h-3zM10 12h2v1h-2zM13 12h2v1h-2zM10 13h5v1h-5zM9 14h7v1h-7zM9 15h2v1h-2zM14 15h2v1h-2z"/><path fill="#ffffff" d="M12 12h1v1h-1z"/></svg><svg class="ic" style="left:11.0px;top:497px" width="9" height="8" viewBox="0 0 9 8"><path d="M0 0H9L4.5 7.5Z" fill="#8e8e8e"/></svg><svg class="ic" style="left:37px;top:510px" width="16" height="16" viewBox="0 0 16 16" shape-rendering="crispEdges"><path fill="#7b4210" d="M1 1h12v1h-12zM1 2h2v1h-2zM6 2h1v1h-1zM9 2h1v1h-1zM12 2h1v1h-1zM1 3h1v1h-1zM3 3h12v1h-12zM1 4h1v1h-1zM3 4h1v1h-1zM5 4h1v1h-1zM8 4h1v1h-1zM11 4h2v1h-2zM14 4h1v1h-1zM1 5h3v1h-3zM5 5h11v1h-11zM1 6h1v1h-1zM3 6h3v1h-3zM8 6h1v1h-1zM12 6h1v1h-1zM15 6h1v1h-1zM1 7h1v1h-1zM3 7h3v1h-3zM8 7h1v1h-1zM12 7h1v1h-1zM15 7h1v1h-1zM1 8h3v1h-3zM5 8h1v1h-1zM8 8h1v1h-1zM12 8h1v1h-1zM15 8h1v1h-1zM1 9h1v1h-1zM3 9h1v1h-1zM5 9h11v1h-11zM1 10h1v1h-1zM3 10h3v1h-3zM8 10h1v1h-1zM12 10h1v1h-1zM15 10h1v1h-1zM1 11h1v1h-1zM3 11h3v1h-3zM8 11h1v1h-1zM12 11h1v1h-1zM15 11h1v1h-1zM1 12h3v1h-3zM5 12h11v1h-11zM3 13h1v1h-1zM5 13h1v1h-1zM8 13h1v1h-1zM12 13h1v1h-1zM15 13h1v1h-1zM3 14h3v1h-3zM8 14h1v1h-1zM12 14h1v1h-1zM15 14h1v1h-1zM5 15h11v1h-11z"/><path fill="#ffffff" d="M3 2h3v1h-3zM7 2h2v1h-2zM10 2h2v1h-2zM2 3h1v1h-1zM2 4h1v1h-1zM4 4h1v1h-1zM6 4h2v1h-2zM9 4h2v1h-2zM13 4h1v1h-1zM4 5h1v1h-1zM2 6h1v1h-1zM6 6h2v1h-2zM9 6h3v1h-3zM13 6h2v1h-2zM2 7h1v1h-1zM6 7h2v1h-2zM9 7h3v1h-3zM13 7h2v1h-2zM4 8h1v1h-1zM6 8h2v1h-2zM9 8h3v1h-3zM13 8h2v1h-2zM2 9h1v1h-1zM4 9h1v1h-1zM2 10h1v1h-1zM6 10h2v1h-2zM9 10h3v1h-3zM13 10h2v1h-2zM2 11h1v1h-1zM6 11h2v1h-2zM9 11h3v1h-3zM13 11h2v1h-2zM4 12h1v1h-1zM4 13h1v1h-1zM6 13h2v1h-2zM9 13h3v1h-3zM13 13h2v1h-2zM6 14h2v1h-2zM9 14h3v1h-3zM13 14h2v1h-2z"/></svg><svg class="ic" style="left:37px;top:527px" width="16" height="16" viewBox="0 0 16 16" shape-rendering="crispEdges"><path fill="#7b4210" d="M1 1h12v1h-12zM1 2h2v1h-2zM6 2h1v1h-1zM9 2h1v1h-1zM12 2h1v1h-1zM1 3h1v1h-1zM3 3h12v1h-12zM1 4h1v1h-1zM3 4h1v1h-1zM5 4h1v1h-1zM8 4h1v1h-1zM11 4h2v1h-2zM14 4h1v1h-1zM1 5h3v1h-3zM5 5h11v1h-11zM1 6h1v1h-1zM3 6h3v1h-3zM8 6h1v1h-1zM12 6h1v1h-1zM15 6h1v1h-1zM1 7h1v1h-1zM3 7h3v1h-3zM8 7h1v1h-1zM12 7h1v1h-1zM15 7h1v1h-1zM1 8h3v1h-3zM5 8h1v1h-1zM8 8h1v1h-1zM12 8h1v1h-1zM15 8h1v1h-1zM1 9h1v1h-1zM3 9h1v1h-1zM5 9h11v1h-11zM1 10h1v1h-1zM3 10h3v1h-3zM8 10h1v1h-1zM12 10h1v1h-1zM15 10h1v1h-1zM1 11h1v1h-1zM3 11h3v1h-3zM8 11h1v1h-1zM12 11h1v1h-1zM15 11h1v1h-1zM1 12h3v1h-3zM5 12h11v1h-11zM3 13h1v1h-1zM5 13h1v1h-1zM8 13h1v1h-1zM12 13h1v1h-1zM15 13h1v1h-1zM3 14h3v1h-3zM8 14h1v1h-1zM12 14h1v1h-1zM15 14h1v1h-1zM5 15h11v1h-11z"/><path fill="#ffffff" d="M3 2h3v1h-3zM7 2h2v1h-2zM10 2h2v1h-2zM2 3h1v1h-1zM2 4h1v1h-1zM4 4h1v1h-1zM6 4h2v1h-2zM9 4h2v1h-2zM13 4h1v1h-1zM4 5h1v1h-1zM2 6h1v1h-1zM6 6h2v1h-2zM9 6h3v1h-3zM13 6h2v1h-2zM2 7h1v1h-1zM6 7h2v1h-2zM9 7h3v1h-3zM13 7h2v1h-2zM4 8h1v1h-1zM6 8h2v1h-2zM9 8h3v1h-3zM13 8h2v1h-2zM2 9h1v1h-1zM4 9h1v1h-1zM2 10h1v1h-1zM6 10h2v1h-2zM9 10h3v1h-3zM13 10h2v1h-2zM2 11h1v1h-1zM6 11h2v1h-2zM9 11h3v1h-3zM13 11h2v1h-2zM4 12h1v1h-1zM4 13h1v1h-1zM6 13h2v1h-2zM9 13h3v1h-3zM13 13h2v1h-2zM6 14h2v1h-2zM9 14h3v1h-3zM13 14h2v1h-2z"/></svg><svg class="ic" style="left:37px;top:544px" width="16" height="16" viewBox="0 0 16 16" shape-rendering="crispEdges"><path fill="#7b4210" d="M1 1h12v1h-12zM1 2h2v1h-2zM6 2h1v1h-1zM9 2h1v1h-1zM12 2h1v1h-1zM1 3h1v1h-1zM3 3h12v1h-12zM1 4h1v1h-1zM3 4h1v1h-1zM5 4h1v1h-1zM8 4h1v1h-1zM11 4h2v1h-2zM14 4h1v1h-1zM1 5h3v1h-3zM5 5h11v1h-11zM1 6h1v1h-1zM3 6h3v1h-3zM8 6h1v1h-1zM12 6h1v1h-1zM15 6h1v1h-1zM1 7h1v1h-1zM3 7h3v1h-3zM8 7h1v1h-1zM12 7h1v1h-1zM15 7h1v1h-1zM1 8h3v1h-3zM5 8h1v1h-1zM8 8h1v1h-1zM12 8h1v1h-1zM15 8h1v1h-1zM1 9h1v1h-1zM3 9h1v1h-1zM5 9h11v1h-11zM1 10h1v1h-1zM3 10h3v1h-3zM8 10h1v1h-1zM12 10h1v1h-1zM15 10h1v1h-1zM1 11h1v1h-1zM3 11h3v1h-3zM8 11h1v1h-1zM12 11h1v1h-1zM15 11h1v1h-1zM1 12h3v1h-3zM5 12h11v1h-11zM3 13h1v1h-1zM5 13h1v1h-1zM8 13h1v1h-1zM12 13h1v1h-1zM15 13h1v1h-1zM3 14h3v1h-3zM8 14h1v1h-1zM12 14h1v1h-1zM15 14h1v1h-1zM5 15h11v1h-11z"/><path fill="#ffffff" d="M3 2h3v1h-3zM7 2h2v1h-2zM10 2h2v1h-2zM2 3h1v1h-1zM2 4h1v1h-1zM4 4h1v1h-1zM6 4h2v1h-2zM9 4h2v1h-2zM13 4h1v1h-1zM4 5h1v1h-1zM2 6h1v1h-1zM6 6h2v1h-2zM9 6h3v1h-3zM13 6h2v1h-2zM2 7h1v1h-1zM6 7h2v1h-2zM9 7h3v1h-3zM13 7h2v1h-2zM4 8h1v1h-1zM6 8h2v1h-2zM9 8h3v1h-3zM13 8h2v1h-2zM2 9h1v1h-1zM4 9h1v1h-1zM2 10h1v1h-1zM6 10h2v1h-2zM9 10h3v1h-3zM13 10h2v1h-2zM2 11h1v1h-1zM6 11h2v1h-2zM9 11h3v1h-3zM13 11h2v1h-2zM4 12h1v1h-1zM4 13h1v1h-1zM6 13h2v1h-2zM9 13h3v1h-3zM13 13h2v1h-2zM6 14h2v1h-2zM9 14h3v1h-3zM13 14h2v1h-2z"/></svg><svg class="ic" style="left:37px;top:561px" width="16" height="16" viewBox="0 0 16 16" shape-rendering="crispEdges"><path fill="#7b4210" d="M1 1h12v1h-12zM1 2h2v1h-2zM6 2h1v1h-1zM9 2h1v1h-1zM12 2h1v1h-1zM1 3h1v1h-1zM3 3h12v1h-12zM1 4h1v1h-1zM3 4h1v1h-1zM5 4h1v1h-1zM8 4h1v1h-1zM11 4h2v1h-2zM14 4h1v1h-1zM1 5h3v1h-3zM5 5h11v1h-11zM1 6h1v1h-1zM3 6h3v1h-3zM8 6h1v1h-1zM12 6h1v1h-1zM15 6h1v1h-1zM1 7h1v1h-1zM3 7h3v1h-3zM8 7h1v1h-1zM12 7h1v1h-1zM15 7h1v1h-1zM1 8h3v1h-3zM5 8h1v1h-1zM8 8h1v1h-1zM12 8h1v1h-1zM15 8h1v1h-1zM1 9h1v1h-1zM3 9h1v1h-1zM5 9h11v1h-11zM1 10h1v1h-1zM3 10h3v1h-3zM8 10h1v1h-1zM12 10h1v1h-1zM15 10h1v1h-1zM1 11h1v1h-1zM3 11h3v1h-3zM8 11h1v1h-1zM12 11h1v1h-1zM15 11h1v1h-1zM1 12h3v1h-3zM5 12h11v1h-11zM3 13h1v1h-1zM5 13h1v1h-1zM8 13h1v1h-1zM12 13h1v1h-1zM15 13h1v1h-1zM3 14h3v1h-3zM8 14h1v1h-1zM12 14h1v1h-1zM15 14h1v1h-1zM5 15h11v1h-11z"/><path fill="#ffffff" d="M3 2h3v1h-3zM7 2h2v1h-2zM10 2h2v1h-2zM2 3h1v1h-1zM2 4h1v1h-1zM4 4h1v1h-1zM6 4h2v1h-2zM9 4h2v1h-2zM13 4h1v1h-1zM4 5h1v1h-1zM2 6h1v1h-1zM6 6h2v1h-2zM9 6h3v1h-3zM13 6h2v1h-2zM2 7h1v1h-1zM6 7h2v1h-2zM9 7h3v1h-3zM13 7h2v1h-2zM4 8h1v1h-1zM6 8h2v1h-2zM9 8h3v1h-3zM13 8h2v1h-2zM2 9h1v1h-1zM4 9h1v1h-1zM2 10h1v1h-1zM6 10h2v1h-2zM9 10h3v1h-3zM13 10h2v1h-2zM2 11h1v1h-1zM6 11h2v1h-2zM9 11h3v1h-3zM13 11h2v1h-2zM4 12h1v1h-1zM4 13h1v1h-1zM6 13h2v1h-2zM9 13h3v1h-3zM13 13h2v1h-2zM6 14h2v1h-2zM9 14h3v1h-3zM13 14h2v1h-2z"/></svg><svg class="ic" style="left:37px;top:578px" width="16" height="16" viewBox="0 0 16 16" shape-rendering="crispEdges"><path fill="#7b4210" d="M1 1h12v1h-12zM1 2h2v1h-2zM6 2h1v1h-1zM9 2h1v1h-1zM12 2h1v1h-1zM1 3h1v1h-1zM3 3h12v1h-12zM1 4h1v1h-1zM3 4h1v1h-1zM5 4h1v1h-1zM8 4h1v1h-1zM11 4h2v1h-2zM14 4h1v1h-1zM1 5h3v1h-3zM5 5h11v1h-11zM1 6h1v1h-1zM3 6h3v1h-3zM8 6h1v1h-1zM12 6h1v1h-1zM15 6h1v1h-1zM1 7h1v1h-1zM3 7h3v1h-3zM8 7h1v1h-1zM12 7h1v1h-1zM15 7h1v1h-1zM1 8h3v1h-3zM5 8h1v1h-1zM8 8h1v1h-1zM12 8h1v1h-1zM15 8h1v1h-1zM1 9h1v1h-1zM3 9h1v1h-1zM5 9h11v1h-11zM1 10h1v1h-1zM3 10h3v1h-3zM8 10h1v1h-1zM12 10h1v1h-1zM15 10h1v1h-1zM1 11h1v1h-1zM3 11h3v1h-3zM8 11h1v1h-1zM12 11h1v1h-1zM15 11h1v1h-1zM1 12h3v1h-3zM5 12h11v1h-11zM3 13h1v1h-1zM5 13h1v1h-1zM8 13h1v1h-1zM12 13h1v1h-1zM15 13h1v1h-1zM3 14h3v1h-3zM8 14h1v1h-1zM12 14h1v1h-1zM15 14h1v1h-1zM5 15h11v1h-11z"/><path fill="#ffffff" d="M3 2h3v1h-3zM7 2h2v1h-2zM10 2h2v1h-2zM2 3h1v1h-1zM2 4h1v1h-1zM4 4h1v1h-1zM6 4h2v1h-2zM9 4h2v1h-2zM13 4h1v1h-1zM4 5h1v1h-1zM2 6h1v1h-1zM6 6h2v1h-2zM9 6h3v1h-3zM13 6h2v1h-2zM2 7h1v1h-1zM6 7h2v1h-2zM9 7h3v1h-3zM13 7h2v1h-2zM4 8h1v1h-1zM6 8h2v1h-2zM9 8h3v1h-3zM13 8h2v1h-2zM2 9h1v1h-1zM4 9h1v1h-1zM2 10h1v1h-1zM6 10h2v1h-2zM9 10h3v1h-3zM13 10h2v1h-2zM2 11h1v1h-1zM6 11h2v1h-2zM9 11h3v1h-3zM13 11h2v1h-2zM4 12h1v1h-1zM4 13h1v1h-1zM6 13h2v1h-2zM9 13h3v1h-3zM13 13h2v1h-2zM6 14h2v1h-2zM9 14h3v1h-3zM13 14h2v1h-2z"/></svg><svg class="ic" style="left:37px;top:595px" width="16" height="16" viewBox="0 0 16 16" shape-rendering="crispEdges"><path fill="#7b4210" d="M1 1h12v1h-12zM1 2h2v1h-2zM6 2h1v1h-1zM9 2h1v1h-1zM12 2h1v1h-1zM1 3h1v1h-1zM3 3h12v1h-12zM1 4h1v1h-1zM3 4h1v1h-1zM5 4h1v1h-1zM8 4h1v1h-1zM11 4h2v1h-2zM14 4h1v1h-1zM1 5h3v1h-3zM5 5h11v1h-11zM1 6h1v1h-1zM3 6h3v1h-3zM8 6h1v1h-1zM12 6h1v1h-1zM15 6h1v1h-1zM1 7h1v1h-1zM3 7h3v1h-3zM8 7h1v1h-1zM12 7h1v1h-1zM15 7h1v1h-1zM1 8h3v1h-3zM5 8h1v1h-1zM8 8h1v1h-1zM12 8h1v1h-1zM15 8h1v1h-1zM1 9h1v1h-1zM3 9h1v1h-1zM5 9h11v1h-11zM1 10h1v1h-1zM3 10h3v1h-3zM8 10h1v1h-1zM12 10h1v1h-1zM15 10h1v1h-1zM1 11h1v1h-1zM3 11h3v1h-3zM8 11h1v1h-1zM12 11h1v1h-1zM15 11h1v1h-1zM1 12h3v1h-3zM5 12h11v1h-11zM3 13h1v1h-1zM5 13h1v1h-1zM8 13h1v1h-1zM12 13h1v1h-1zM15 13h1v1h-1zM3 14h3v1h-3zM8 14h1v1h-1zM12 14h1v1h-1zM15 14h1v1h-1zM5 15h11v1h-11z"/><path fill="#ffffff" d="M3 2h3v1h-3zM7 2h2v1h-2zM10 2h2v1h-2zM2 3h1v1h-1zM2 4h1v1h-1zM4 4h1v1h-1zM6 4h2v1h-2zM9 4h2v1h-2zM13 4h1v1h-1zM4 5h1v1h-1zM2 6h1v1h-1zM6 6h2v1h-2zM9 6h3v1h-3zM13 6h2v1h-2zM2 7h1v1h-1zM6 7h2v1h-2zM9 7h3v1h-3zM13 7h2v1h-2zM4 8h1v1h-1zM6 8h2v1h-2zM9 8h3v1h-3zM13 8h2v1h-2zM2 9h1v1h-1zM4 9h1v1h-1zM2 10h1v1h-1zM6 10h2v1h-2zM9 10h3v1h-3zM13 10h2v1h-2zM2 11h1v1h-1zM6 11h2v1h-2zM9 11h3v1h-3zM13 11h2v1h-2zM4 12h1v1h-1zM4 13h1v1h-1zM6 13h2v1h-2zM9 13h3v1h-3zM13 13h2v1h-2zM6 14h2v1h-2zM9 14h3v1h-3zM13 14h2v1h-2z"/></svg><svg class="ic" style="left:37px;top:612px" width="16" height="16" viewBox="0 0 16 16" shape-rendering="crispEdges"><path fill="#7b4210" d="M1 1h12v1h-12zM1 2h2v1h-2zM6 2h1v1h-1zM9 2h1v1h-1zM12 2h1v1h-1zM1 3h1v1h-1zM3 3h12v1h-12zM1 4h1v1h-1zM3 4h1v1h-1zM5 4h1v1h-1zM8 4h1v1h-1zM11 4h2v1h-2zM14 4h1v1h-1zM1 5h3v1h-3zM5 5h11v1h-11zM1 6h1v1h-1zM3 6h3v1h-3zM8 6h1v1h-1zM12 6h1v1h-1zM15 6h1v1h-1zM1 7h1v1h-1zM3 7h3v1h-3zM8 7h1v1h-1zM12 7h1v1h-1zM15 7h1v1h-1zM1 8h3v1h-3zM5 8h1v1h-1zM8 8h1v1h-1zM12 8h1v1h-1zM15 8h1v1h-1zM1 9h1v1h-1zM3 9h1v1h-1zM5 9h11v1h-11zM1 10h1v1h-1zM3 10h3v1h-3zM8 10h1v1h-1zM12 10h1v1h-1zM15 10h1v1h-1zM1 11h1v1h-1zM3 11h3v1h-3zM8 11h1v1h-1zM12 11h1v1h-1zM15 11h1v1h-1zM1 12h3v1h-3zM5 12h11v1h-11zM3 13h1v1h-1zM5 13h1v1h-1zM8 13h1v1h-1zM12 13h1v1h-1zM15 13h1v1h-1zM3 14h3v1h-3zM8 14h1v1h-1zM12 14h1v1h-1zM15 14h1v1h-1zM5 15h11v1h-11z"/><path fill="#ffffff" d="M3 2h3v1h-3zM7 2h2v1h-2zM10 2h2v1h-2zM2 3h1v1h-1zM2 4h1v1h-1zM4 4h1v1h-1zM6 4h2v1h-2zM9 4h2v1h-2zM13 4h1v1h-1zM4 5h1v1h-1zM2 6h1v1h-1zM6 6h2v1h-2zM9 6h3v1h-3zM13 6h2v1h-2zM2 7h1v1h-1zM6 7h2v1h-2zM9 7h3v1h-3zM13 7h2v1h-2zM4 8h1v1h-1zM6 8h2v1h-2zM9 8h3v1h-3zM13 8h2v1h-2zM2 9h1v1h-1zM4 9h1v1h-1zM2 10h1v1h-1zM6 10h2v1h-2zM9 10h3v1h-3zM13 10h2v1h-2zM2 11h1v1h-1zM6 11h2v1h-2zM9 11h3v1h-3zM13 11h2v1h-2zM4 12h1v1h-1zM4 13h1v1h-1zM6 13h2v1h-2zM9 13h3v1h-3zM13 13h2v1h-2zM6 14h2v1h-2zM9 14h3v1h-3zM13 14h2v1h-2z"/></svg><svg class="ic" style="left:37px;top:629px" width="16" height="16" viewBox="0 0 16 16" shape-rendering="crispEdges"><path fill="#7b4210" d="M1 1h12v1h-12zM1 2h2v1h-2zM6 2h1v1h-1zM9 2h1v1h-1zM12 2h1v1h-1zM1 3h1v1h-1zM3 3h12v1h-12zM1 4h1v1h-1zM3 4h1v1h-1zM5 4h1v1h-1zM8 4h1v1h-1zM11 4h2v1h-2zM14 4h1v1h-1zM1 5h3v1h-3zM5 5h11v1h-11zM1 6h1v1h-1zM3 6h3v1h-3zM8 6h1v1h-1zM12 6h1v1h-1zM15 6h1v1h-1zM1 7h1v1h-1zM3 7h3v1h-3zM8 7h1v1h-1zM12 7h1v1h-1zM15 7h1v1h-1zM1 8h3v1h-3zM5 8h1v1h-1zM8 8h1v1h-1zM12 8h1v1h-1zM15 8h1v1h-1zM1 9h1v1h-1zM3 9h1v1h-1zM5 9h11v1h-11zM1 10h1v1h-1zM3 10h3v1h-3zM8 10h1v1h-1zM12 10h1v1h-1zM15 10h1v1h-1zM1 11h1v1h-1zM3 11h3v1h-3zM8 11h1v1h-1zM12 11h1v1h-1zM15 11h1v1h-1zM1 12h3v1h-3zM5 12h11v1h-11zM3 13h1v1h-1zM5 13h1v1h-1zM8 13h1v1h-1zM12 13h1v1h-1zM15 13h1v1h-1zM3 14h3v1h-3zM8 14h1v1h-1zM12 14h1v1h-1zM15 14h1v1h-1zM5 15h11v1h-11z"/><path fill="#ffffff" d="M3 2h3v1h-3zM7 2h2v1h-2zM10 2h2v1h-2zM2 3h1v1h-1zM2 4h1v1h-1zM4 4h1v1h-1zM6 4h2v1h-2zM9 4h2v1h-2zM13 4h1v1h-1zM4 5h1v1h-1zM2 6h1v1h-1zM6 6h2v1h-2zM9 6h3v1h-3zM13 6h2v1h-2zM2 7h1v1h-1zM6 7h2v1h-2zM9 7h3v1h-3zM13 7h2v1h-2zM4 8h1v1h-1zM6 8h2v1h-2zM9 8h3v1h-3zM13 8h2v1h-2zM2 9h1v1h-1zM4 9h1v1h-1zM2 10h1v1h-1zM6 10h2v1h-2zM9 10h3v1h-3zM13 10h2v1h-2zM2 11h1v1h-1zM6 11h2v1h-2zM9 11h3v1h-3zM13 11h2v1h-2zM4 12h1v1h-1zM4 13h1v1h-1zM6 13h2v1h-2zM9 13h3v1h-3zM13 13h2v1h-2zM6 14h2v1h-2zM9 14h3v1h-3zM13 14h2v1h-2z"/></svg><svg class="ic" style="left:37px;top:646px" width="16" height="16" viewBox="0 0 16 16" shape-rendering="crispEdges"><path fill="#7b4210" d="M1 1h12v1h-12zM1 2h2v1h-2zM6 2h1v1h-1zM9 2h1v1h-1zM12 2h1v1h-1zM1 3h1v1h-1zM3 3h12v1h-12zM1 4h1v1h-1zM3 4h1v1h-1zM5 4h1v1h-1zM8 4h1v1h-1zM11 4h2v1h-2zM14 4h1v1h-1zM1 5h3v1h-3zM5 5h11v1h-11zM1 6h1v1h-1zM3 6h3v1h-3zM8 6h1v1h-1zM12 6h1v1h-1zM15 6h1v1h-1zM1 7h1v1h-1zM3 7h3v1h-3zM8 7h1v1h-1zM12 7h1v1h-1zM15 7h1v1h-1zM1 8h3v1h-3zM5 8h1v1h-1zM8 8h1v1h-1zM12 8h1v1h-1zM15 8h1v1h-1zM1 9h1v1h-1zM3 9h1v1h-1zM5 9h11v1h-11zM1 10h1v1h-1zM3 10h3v1h-3zM8 10h1v1h-1zM12 10h1v1h-1zM15 10h1v1h-1zM1 11h1v1h-1zM3 11h3v1h-3zM8 11h1v1h-1zM12 11h1v1h-1zM15 11h1v1h-1zM1 12h3v1h-3zM5 12h11v1h-11zM3 13h1v1h-1zM5 13h1v1h-1zM8 13h1v1h-1zM12 13h1v1h-1zM15 13h1v1h-1zM3 14h3v1h-3zM8 14h1v1h-1zM12 14h1v1h-1zM15 14h1v1h-1zM5 15h11v1h-11z"/><path fill="#ffffff" d="M3 2h3v1h-3zM7 2h2v1h-2zM10 2h2v1h-2zM2 3h1v1h-1zM2 4h1v1h-1zM4 4h1v1h-1zM6 4h2v1h-2zM9 4h2v1h-2zM13 4h1v1h-1zM4 5h1v1h-1zM2 6h1v1h-1zM6 6h2v1h-2zM9 6h3v1h-3zM13 6h2v1h-2zM2 7h1v1h-1zM6 7h2v1h-2zM9 7h3v1h-3zM13 7h2v1h-2zM4 8h1v1h-1zM6 8h2v1h-2zM9 8h3v1h-3zM13 8h2v1h-2zM2 9h1v1h-1zM4 9h1v1h-1zM2 10h1v1h-1zM6 10h2v1h-2zM9 10h3v1h-3zM13 10h2v1h-2zM2 11h1v1h-1zM6 11h2v1h-2zM9 11h3v1h-3zM13 11h2v1h-2zM4 12h1v1h-1zM4 13h1v1h-1zM6 13h2v1h-2zM9 13h3v1h-3zM13 13h2v1h-2zM6 14h2v1h-2zM9 14h3v1h-3zM13 14h2v1h-2z"/></svg><svg class="ic" style="left:37px;top:663px" width="16" height="16" viewBox="0 0 16 16" shape-rendering="crispEdges"><path fill="#7b4210" d="M1 1h12v1h-12zM1 2h2v1h-2zM6 2h1v1h-1zM9 2h1v1h-1zM12 2h1v1h-1zM1 3h1v1h-1zM3 3h12v1h-12zM1 4h1v1h-1zM3 4h1v1h-1zM5 4h1v1h-1zM8 4h1v1h-1zM11 4h2v1h-2zM14 4h1v1h-1zM1 5h3v1h-3zM5 5h11v1h-11zM1 6h1v1h-1zM3 6h3v1h-3zM8 6h1v1h-1zM12 6h1v1h-1zM15 6h1v1h-1zM1 7h1v1h-1zM3 7h3v1h-3zM8 7h1v1h-1zM12 7h1v1h-1zM15 7h1v1h-1zM1 8h3v1h-3zM5 8h1v1h-1zM8 8h1v1h-1zM12 8h1v1h-1zM15 8h1v1h-1zM1 9h1v1h-1zM3 9h1v1h-1zM5 9h11v1h-11zM1 10h1v1h-1zM3 10h3v1h-3zM8 10h1v1h-1zM12 10h1v1h-1zM15 10h1v1h-1zM1 11h1v1h-1zM3 11h3v1h-3zM8 11h1v1h-1zM12 11h1v1h-1zM15 11h1v1h-1zM1 12h3v1h-3zM5 12h11v1h-11zM3 13h1v1h-1zM5 13h1v1h-1zM8 13h1v1h-1zM12 13h1v1h-1zM15 13h1v1h-1zM3 14h3v1h-3zM8 14h1v1h-1zM12 14h1v1h-1zM15 14h1v1h-1zM5 15h11v1h-11z"/><path fill="#ffffff" d="M3 2h3v1h-3zM7 2h2v1h-2zM10 2h2v1h-2zM2 3h1v1h-1zM2 4h1v1h-1zM4 4h1v1h-1zM6 4h2v1h-2zM9 4h2v1h-2zM13 4h1v1h-1zM4 5h1v1h-1zM2 6h1v1h-1zM6 6h2v1h-2zM9 6h3v1h-3zM13 6h2v1h-2zM2 7h1v1h-1zM6 7h2v1h-2zM9 7h3v1h-3zM13 7h2v1h-2zM4 8h1v1h-1zM6 8h2v1h-2zM9 8h3v1h-3zM13 8h2v1h-2zM2 9h1v1h-1zM4 9h1v1h-1zM2 10h1v1h-1zM6 10h2v1h-2zM9 10h3v1h-3zM13 10h2v1h-2zM2 11h1v1h-1zM6 11h2v1h-2zM9 11h3v1h-3zM13 11h2v1h-2zM4 12h1v1h-1zM4 13h1v1h-1zM6 13h2v1h-2zM9 13h3v1h-3zM13 13h2v1h-2zM6 14h2v1h-2zM9 14h3v1h-3zM13 14h2v1h-2z"/></svg><svg class="ic" style="left:37px;top:680px" width="16" height="16" viewBox="0 0 16 16" shape-rendering="crispEdges"><path fill="#7b4210" d="M1 1h12v1h-12zM1 2h2v1h-2zM6 2h1v1h-1zM9 2h1v1h-1zM12 2h1v1h-1zM1 3h1v1h-1zM3 3h12v1h-12zM1 4h1v1h-1zM3 4h1v1h-1zM5 4h1v1h-1zM8 4h1v1h-1zM11 4h2v1h-2zM14 4h1v1h-1zM1 5h3v1h-3zM5 5h11v1h-11zM1 6h1v1h-1zM3 6h3v1h-3zM8 6h1v1h-1zM12 6h1v1h-1zM15 6h1v1h-1zM1 7h1v1h-1zM3 7h3v1h-3zM8 7h1v1h-1zM12 7h1v1h-1zM15 7h1v1h-1zM1 8h3v1h-3zM5 8h1v1h-1zM8 8h1v1h-1zM12 8h1v1h-1zM15 8h1v1h-1zM1 9h1v1h-1zM3 9h1v1h-1zM5 9h11v1h-11zM1 10h1v1h-1zM3 10h3v1h-3zM8 10h1v1h-1zM12 10h1v1h-1zM15 10h1v1h-1zM1 11h1v1h-1zM3 11h3v1h-3zM8 11h1v1h-1zM12 11h1v1h-1zM15 11h1v1h-1zM1 12h3v1h-3zM5 12h11v1h-11zM3 13h1v1h-1zM5 13h1v1h-1zM8 13h1v1h-1zM12 13h1v1h-1zM15 13h1v1h-1zM3 14h3v1h-3zM8 14h1v1h-1zM12 14h1v1h-1zM15 14h1v1h-1zM5 15h11v1h-11z"/><path fill="#ffffff" d="M3 2h3v1h-3zM7 2h2v1h-2zM10 2h2v1h-2zM2 3h1v1h-1zM2 4h1v1h-1zM4 4h1v1h-1zM6 4h2v1h-2zM9 4h2v1h-2zM13 4h1v1h-1zM4 5h1v1h-1zM2 6h1v1h-1zM6 6h2v1h-2zM9 6h3v1h-3zM13 6h2v1h-2zM2 7h1v1h-1zM6 7h2v1h-2zM9 7h3v1h-3zM13 7h2v1h-2zM4 8h1v1h-1zM6 8h2v1h-2zM9 8h3v1h-3zM13 8h2v1h-2zM2 9h1v1h-1zM4 9h1v1h-1zM2 10h1v1h-1zM6 10h2v1h-2zM9 10h3v1h-3zM13 10h2v1h-2zM2 11h1v1h-1zM6 11h2v1h-2zM9 11h3v1h-3zM13 11h2v1h-2zM4 12h1v1h-1zM4 13h1v1h-1zM6 13h2v1h-2zM9 13h3v1h-3zM13 13h2v1h-2zM6 14h2v1h-2zM9 14h3v1h-3zM13 14h2v1h-2z"/></svg><svg class="ic" style="left:37px;top:697px" width="16" height="16" viewBox="0 0 16 16" shape-rendering="crispEdges"><path fill="#7b4210" d="M1 1h12v1h-12zM1 2h2v1h-2zM6 2h1v1h-1zM9 2h1v1h-1zM12 2h1v1h-1zM1 3h1v1h-1zM3 3h12v1h-12zM1 4h1v1h-1zM3 4h1v1h-1zM5 4h1v1h-1zM8 4h1v1h-1zM11 4h2v1h-2zM14 4h1v1h-1zM1 5h3v1h-3zM5 5h11v1h-11zM1 6h1v1h-1zM3 6h3v1h-3zM8 6h1v1h-1zM12 6h1v1h-1zM15 6h1v1h-1zM1 7h1v1h-1zM3 7h3v1h-3zM8 7h1v1h-1zM12 7h1v1h-1zM15 7h1v1h-1zM1 8h3v1h-3zM5 8h1v1h-1zM8 8h1v1h-1zM12 8h1v1h-1zM15 8h1v1h-1zM1 9h1v1h-1zM3 9h1v1h-1zM5 9h11v1h-11zM1 10h1v1h-1zM3 10h3v1h-3zM8 10h1v1h-1zM12 10h1v1h-1zM15 10h1v1h-1zM1 11h1v1h-1zM3 11h3v1h-3zM8 11h1v1h-1zM12 11h1v1h-1zM15 11h1v1h-1zM1 12h3v1h-3zM5 12h11v1h-11zM3 13h1v1h-1zM5 13h1v1h-1zM8 13h1v1h-1zM12 13h1v1h-1zM15 13h1v1h-1zM3 14h3v1h-3zM8 14h1v1h-1zM12 14h1v1h-1zM15 14h1v1h-1zM5 15h11v1h-11z"/><path fill="#ffffff" d="M3 2h3v1h-3zM7 2h2v1h-2zM10 2h2v1h-2zM2 3h1v1h-1zM2 4h1v1h-1zM4 4h1v1h-1zM6 4h2v1h-2zM9 4h2v1h-2zM13 4h1v1h-1zM4 5h1v1h-1zM2 6h1v1h-1zM6 6h2v1h-2zM9 6h3v1h-3zM13 6h2v1h-2zM2 7h1v1h-1zM6 7h2v1h-2zM9 7h3v1h-3zM13 7h2v1h-2zM4 8h1v1h-1zM6 8h2v1h-2zM9 8h3v1h-3zM13 8h2v1h-2zM2 9h1v1h-1zM4 9h1v1h-1zM2 10h1v1h-1zM6 10h2v1h-2zM9 10h3v1h-3zM13 10h2v1h-2zM2 11h1v1h-1zM6 11h2v1h-2zM9 11h3v1h-3zM13 11h2v1h-2zM4 12h1v1h-1zM4 13h1v1h-1zM6 13h2v1h-2zM9 13h3v1h-3zM13 13h2v1h-2zM6 14h2v1h-2zM9 14h3v1h-3zM13 14h2v1h-2z"/></svg><svg class="ic" style="left:37px;top:714px" width="16" height="16" viewBox="0 0 16 16" shape-rendering="crispEdges"><path fill="#7b4210" d="M1 1h12v1h-12zM1 2h2v1h-2zM6 2h1v1h-1zM9 2h1v1h-1zM12 2h1v1h-1zM1 3h1v1h-1zM3 3h12v1h-12zM1 4h1v1h-1zM3 4h1v1h-1zM5 4h1v1h-1zM8 4h1v1h-1zM11 4h2v1h-2zM14 4h1v1h-1zM1 5h3v1h-3zM5 5h11v1h-11zM1 6h1v1h-1zM3 6h3v1h-3zM8 6h1v1h-1zM12 6h1v1h-1zM15 6h1v1h-1zM1 7h1v1h-1zM3 7h3v1h-3zM8 7h1v1h-1zM12 7h1v1h-1zM15 7h1v1h-1zM1 8h3v1h-3zM5 8h1v1h-1zM8 8h1v1h-1zM12 8h1v1h-1zM15 8h1v1h-1zM1 9h1v1h-1zM3 9h1v1h-1zM5 9h11v1h-11zM1 10h1v1h-1zM3 10h3v1h-3zM8 10h1v1h-1zM12 10h1v1h-1zM15 10h1v1h-1zM1 11h1v1h-1zM3 11h3v1h-3zM8 11h1v1h-1zM12 11h1v1h-1zM15 11h1v1h-1zM1 12h3v1h-3zM5 12h11v1h-11zM3 13h1v1h-1zM5 13h1v1h-1zM8 13h1v1h-1zM12 13h1v1h-1zM15 13h1v1h-1zM3 14h3v1h-3zM8 14h1v1h-1zM12 14h1v1h-1zM15 14h1v1h-1zM5 15h11v1h-11z"/><path fill="#ffffff" d="M3 2h3v1h-3zM7 2h2v1h-2zM10 2h2v1h-2zM2 3h1v1h-1zM2 4h1v1h-1zM4 4h1v1h-1zM6 4h2v1h-2zM9 4h2v1h-2zM13 4h1v1h-1zM4 5h1v1h-1zM2 6h1v1h-1zM6 6h2v1h-2zM9 6h3v1h-3zM13 6h2v1h-2zM2 7h1v1h-1zM6 7h2v1h-2zM9 7h3v1h-3zM13 7h2v1h-2zM4 8h1v1h-1zM6 8h2v1h-2zM9 8h3v1h-3zM13 8h2v1h-2zM2 9h1v1h-1zM4 9h1v1h-1zM2 10h1v1h-1zM6 10h2v1h-2zM9 10h3v1h-3zM13 10h2v1h-2zM2 11h1v1h-1zM6 11h2v1h-2zM9 11h3v1h-3zM13 11h2v1h-2zM4 12h1v1h-1zM4 13h1v1h-1zM6 13h2v1h-2zM9 13h3v1h-3zM13 13h2v1h-2zM6 14h2v1h-2zM9 14h3v1h-3zM13 14h2v1h-2z"/></svg><svg class="ic" style="left:37px;top:731px" width="16" height="16" viewBox="0 0 16 16" shape-rendering="crispEdges"><path fill="#7b4210" d="M1 1h12v1h-12zM1 2h2v1h-2zM6 2h1v1h-1zM9 2h1v1h-1zM12 2h1v1h-1zM1 3h1v1h-1zM3 3h12v1h-12zM1 4h1v1h-1zM3 4h1v1h-1zM5 4h1v1h-1zM8 4h1v1h-1zM11 4h2v1h-2zM14 4h1v1h-1zM1 5h3v1h-3zM5 5h11v1h-11zM1 6h1v1h-1zM3 6h3v1h-3zM8 6h1v1h-1zM12 6h1v1h-1zM15 6h1v1h-1zM1 7h1v1h-1zM3 7h3v1h-3zM8 7h1v1h-1zM12 7h1v1h-1zM15 7h1v1h-1zM1 8h3v1h-3zM5 8h1v1h-1zM8 8h1v1h-1zM12 8h1v1h-1zM15 8h1v1h-1zM1 9h1v1h-1zM3 9h1v1h-1zM5 9h11v1h-11zM1 10h1v1h-1zM3 10h3v1h-3zM8 10h1v1h-1zM12 10h1v1h-1zM15 10h1v1h-1zM1 11h1v1h-1zM3 11h3v1h-3zM8 11h1v1h-1zM12 11h1v1h-1zM15 11h1v1h-1zM1 12h3v1h-3zM5 12h11v1h-11zM3 13h1v1h-1zM5 13h1v1h-1zM8 13h1v1h-1zM12 13h1v1h-1zM15 13h1v1h-1zM3 14h3v1h-3zM8 14h1v1h-1zM12 14h1v1h-1zM15 14h1v1h-1zM5 15h11v1h-11z"/><path fill="#ffffff" d="M3 2h3v1h-3zM7 2h2v1h-2zM10 2h2v1h-2zM2 3h1v1h-1zM2 4h1v1h-1zM4 4h1v1h-1zM6 4h2v1h-2zM9 4h2v1h-2zM13 4h1v1h-1zM4 5h1v1h-1zM2 6h1v1h-1zM6 6h2v1h-2zM9 6h3v1h-3zM13 6h2v1h-2zM2 7h1v1h-1zM6 7h2v1h-2zM9 7h3v1h-3zM13 7h2v1h-2zM4 8h1v1h-1zM6 8h2v1h-2zM9 8h3v1h-3zM13 8h2v1h-2zM2 9h1v1h-1zM4 9h1v1h-1zM2 10h1v1h-1zM6 10h2v1h-2zM9 10h3v1h-3zM13 10h2v1h-2zM2 11h1v1h-1zM6 11h2v1h-2zM9 11h3v1h-3zM13 11h2v1h-2zM4 12h1v1h-1zM4 13h1v1h-1zM6 13h2v1h-2zM9 13h3v1h-3zM13 13h2v1h-2zM6 14h2v1h-2zM9 14h3v1h-3zM13 14h2v1h-2z"/></svg><svg class="ic" style="left:37px;top:748px" width="16" height="16" viewBox="0 0 16 16" shape-rendering="crispEdges"><path fill="#7b4210" d="M1 1h12v1h-12zM1 2h2v1h-2zM6 2h1v1h-1zM9 2h1v1h-1zM12 2h1v1h-1zM1 3h1v1h-1zM3 3h12v1h-12zM1 4h1v1h-1zM3 4h1v1h-1zM5 4h1v1h-1zM8 4h1v1h-1zM11 4h2v1h-2zM14 4h1v1h-1zM1 5h3v1h-3zM5 5h11v1h-11zM1 6h1v1h-1zM3 6h3v1h-3zM8 6h1v1h-1zM12 6h1v1h-1zM15 6h1v1h-1zM1 7h1v1h-1zM3 7h3v1h-3zM8 7h1v1h-1zM12 7h1v1h-1zM15 7h1v1h-1zM1 8h3v1h-3zM5 8h1v1h-1zM8 8h1v1h-1zM12 8h1v1h-1zM15 8h1v1h-1zM1 9h1v1h-1zM3 9h1v1h-1zM5 9h11v1h-11zM1 10h1v1h-1zM3 10h3v1h-3zM8 10h1v1h-1zM12 10h1v1h-1zM15 10h1v1h-1zM1 11h1v1h-1zM3 11h3v1h-3zM8 11h1v1h-1zM12 11h1v1h-1zM15 11h1v1h-1zM1 12h3v1h-3zM5 12h11v1h-11zM3 13h1v1h-1zM5 13h1v1h-1zM8 13h1v1h-1zM12 13h1v1h-1zM15 13h1v1h-1zM3 14h3v1h-3zM8 14h1v1h-1zM12 14h1v1h-1zM15 14h1v1h-1zM5 15h11v1h-11z"/><path fill="#ffffff" d="M3 2h3v1h-3zM7 2h2v1h-2zM10 2h2v1h-2zM2 3h1v1h-1zM2 4h1v1h-1zM4 4h1v1h-1zM6 4h2v1h-2zM9 4h2v1h-2zM13 4h1v1h-1zM4 5h1v1h-1zM2 6h1v1h-1zM6 6h2v1h-2zM9 6h3v1h-3zM13 6h2v1h-2zM2 7h1v1h-1zM6 7h2v1h-2zM9 7h3v1h-3zM13 7h2v1h-2zM4 8h1v1h-1zM6 8h2v1h-2zM9 8h3v1h-3zM13 8h2v1h-2zM2 9h1v1h-1zM4 9h1v1h-1zM2 10h1v1h-1zM6 10h2v1h-2zM9 10h3v1h-3zM13 10h2v1h-2zM2 11h1v1h-1zM6 11h2v1h-2zM9 11h3v1h-3zM13 11h2v1h-2zM4 12h1v1h-1zM4 13h1v1h-1zM6 13h2v1h-2zM9 13h3v1h-3zM13 13h2v1h-2zM6 14h2v1h-2zM9 14h3v1h-3zM13 14h2v1h-2z"/></svg><div class="t" style="left:23.00px;top:1.80px;font-size:13px;line-height:13px;letter-spacing:-0.141px">TRAAAMQ128F1460CD3.h5</div><div class="t" style="left:39.00px;top:18.80px;font-size:13px;line-height:13px;letter-spacing:-0.050px">analysis</div><div class="t" style="left:55.00px;top:35.80px;font-size:13px;line-height:13px;letter-spacing:-0.007px">bars<span style="font-size:9.75px">_</span>confidence</div><div class="t" style="left:55.00px;top:52.80px;font-size:13px;line-height:13px;letter-spacing:0.070px">bars<span style="font-size:9.75px">_</span>start</div><div class="t" style="left:55.00px;top:69.80px;font-size:13px;line-height:13px;letter-spacing:0.007px">beats<span style="font-size:9.75px">_</span>confidence</div><div class="t" style="left:55.00px;top:86.80px;font-size:13px;line-height:13px;letter-spacing:0.043px">beats<span style="font-size:9.75px">_</span>start</div><div class="t" style="left:55.00px;top:103.80px;font-size:13px;line-height:13px;letter-spacing:0.007px">sections<span style="font-size:9.75px">_</span>confidence</div><div class="t" style="left:55.00px;top:120.80px;font-size:13px;line-height:13px;letter-spacing:0.066px">sections<span style="font-size:9.75px">_</span>start</div><div class="t" style="left:55.00px;top:137.80px;font-size:13px;line-height:13px;letter-spacing:-0.072px">segments<span style="font-size:9.75px">_</span>confidence</div><div class="t" style="left:55.00px;top:154.80px;font-size:13px;line-height:13px;letter-spacing:-0.198px">segments<span style="font-size:9.75px">_</span>loudness<span style="font-size:9.75px">_</span>max</div><div class="t" style="left:55.00px;top:171.80px;font-size:13px;line-height:13px;letter-spacing:-0.145px">segments<span style="font-size:9.75px">_</span>loudness<span style="font-size:9.75px">_</span>max<span style="font-size:9.75px">_</span>time</div><div class="t" style="left:55.00px;top:188.80px;font-size:13px;line-height:13px;letter-spacing:-0.073px">segments<span style="font-size:9.75px">_</span>loudness<span style="font-size:9.75px">_</span>start</div><div class="t" style="left:55.00px;top:205.80px;font-size:13px;line-height:13px;letter-spacing:-0.026px">segments<span style="font-size:9.75px">_</span>pitches</div><div class="t" style="left:55.00px;top:222.80px;font-size:13px;line-height:13px;letter-spacing:-0.028px">segments<span style="font-size:9.75px">_</span>start</div><div class="t" style="left:55.00px;top:239.80px;font-size:13px;line-height:13px;letter-spacing:-0.060px">segments<span style="font-size:9.75px">_</span>timbre</div><div class="t" style="left:55.00px;top:256.80px;font-size:13px;line-height:13px;letter-spacing:-0.119px">songs</div><div class="t" style="left:55.00px;top:273.80px;font-size:13px;line-height:13px;letter-spacing:-0.018px">tatums<span style="font-size:9.75px">_</span>confidence</div><div class="t" style="left:55.00px;top:290.80px;font-size:13px;line-height:13px;letter-spacing:0.042px">tatums<span style="font-size:9.75px">_</span>start</div><div class="t" style="left:39.00px;top:307.80px;font-size:13px;line-height:13px;letter-spacing:-0.125px">metadata</div><div class="t" style="left:55.00px;top:324.80px;font-size:13px;line-height:13px;letter-spacing:0.146px">artist<span style="font-size:9.75px">_</span>terms</div><div class="t" style="left:55.00px;top:341.80px;font-size:13px;line-height:13px;letter-spacing:0.129px">artist<span style="font-size:9.75px">_</span>terms<span style="font-size:9.75px">_</span>freq</div><div class="t" style="left:55.00px;top:358.80px;font-size:13px;line-height:13px;letter-spacing:0.010px">artist<span style="font-size:9.75px">_</span>terms<span style="font-size:9.75px">_</span>weight</div><div class="t" style="left:55.00px;top:375.80px;font-size:13px;line-height:13px;letter-spacing:-0.030px">similar<span style="font-size:9.75px">_</span>artists</div><div class="t" style="left:55.00px;top:392.80px;font-size:13px;line-height:13px;letter-spacing:-0.169px;color:#222;-webkit-text-stroke:0.1px #222">songs</div><div class="t" style="left:39.00px;top:409.80px;font-size:13px;line-height:13px;letter-spacing:-0.047px">musicbrainz</div><div class="t" style="left:55.00px;top:426.80px;font-size:13px;line-height:13px;letter-spacing:0.090px">artist<span style="font-size:9.75px">_</span>mbtags</div><div class="t" style="left:55.00px;top:443.80px;font-size:13px;line-height:13px;letter-spacing:0.062px">artist<span style="font-size:9.75px">_</span>mbtags<span style="font-size:9.75px">_</span>count</div><div class="t" style="left:55.00px;top:460.80px;font-size:13px;line-height:13px;letter-spacing:-0.169px">songs</div><div class="t" style="left:23.00px;top:477.80px;font-size:13px;line-height:13px;letter-spacing:0.279px">h5lt.h5</div><div class="t" style="left:39.00px;top:494.80px;font-size:13px;line-height:13px;letter-spacing:0.213px">pmc</div><div class="t" style="left:55.00px;top:511.80px;font-size:13px;line-height:13px;letter-spacing:-0.138px">Arrayed-chunked Index</div><div class="t" style="left:55.00px;top:528.80px;font-size:13px;line-height:13px;letter-spacing:-0.238px">Compressed Index</div><div class="t" style="left:55.00px;top:545.80px;font-size:13px;line-height:13px;letter-spacing:-0.093px">Custom-chunked Index</div><div class="t" style="left:55.00px;top:562.80px;font-size:13px;line-height:13px;letter-spacing:0.000px">Dielectric Constant</div><div class="t" style="left:55.00px;top:579.80px;font-size:13px;line-height:13px;letter-spacing:-0.292px">Quadruple Rank</div><div class="t" style="left:55.00px;top:596.80px;font-size:13px;line-height:13px;letter-spacing:-0.123px">Refractive Index</div><div class="t" style="left:55.00px;top:613.80px;font-size:13px;line-height:13px;letter-spacing:-0.097px">Refractive Index 8</div><div class="t" style="left:55.00px;top:630.80px;font-size:13px;line-height:13px;letter-spacing:-0.101px">Refractive Index f</div><div class="t" style="left:55.00px;top:647.80px;font-size:13px;line-height:13px;letter-spacing:-0.078px">Refractive Index l</div><div class="t" style="left:55.00px;top:664.80px;font-size:13px;line-height:13px;letter-spacing:-0.143px">Refractive Index s</div><div class="t" style="left:55.00px;top:681.80px;font-size:13px;line-height:13px;letter-spacing:-0.100px">Refractive Index u8</div><div class="t" style="left:55.00px;top:698.80px;font-size:13px;line-height:13px;letter-spacing:-0.114px">Refractive Index ui</div><div class="t" style="left:55.00px;top:715.80px;font-size:13px;line-height:13px;letter-spacing:-0.143px">Refractive Index us</div><div class="t" style="left:55.00px;top:732.80px;font-size:13px;line-height:13px;letter-spacing:-0.514px">Two Rank</div><div class="t" style="left:55.00px;top:749.80px;font-size:13px;line-height:13px;letter-spacing:-0.108px">real labels</div></div>
<div id="rp"></div><div id="tabpane"></div><div id="lite"></div><div id="inner"></div><div id="tab1"></div><div id="tab2"></div><div class="fld" style="left:402px;top:53px;width:760px"></div><div class="fld" style="left:402px;top:79px;width:760px"></div><div class="fld" style="left:402px;top:105px;width:760px"></div><div class="fld" style="left:402px;top:131px;width:760px"></div><div class="grp" style="left:308px;top:194px;width:801px;height:156px"></div><div class="fld" style="left:463px;top:205px;width:636px"></div><div class="fld" style="left:463px;top:231px;width:636px"></div><div class="fld" style="left:463px;top:257px;width:636px"></div><div class="fld" style="left:463px;top:283px;width:636px"></div><div style="position:absolute;left:467px;top:286px;width:66px;height:16px;background:#b3d7ff"></div><div id="btn"></div><div class="grp" style="left:308px;top:396px;width:801px;height:120px"></div><div class="grp" style="left:308px;top:562px;width:801px;height:197px"></div><div id="tbl" style="left:314px;top:569px"><div style="position:absolute;left:0;top:33px;width:774px;height:17px;background:#f3f4f4"></div><div style="position:absolute;left:0;top:67px;width:774px;height:17px;background:#f3f4f4"></div><div style="position:absolute;left:0;top:101px;width:774px;height:17px;background:#f3f4f4"></div><div style="position:absolute;left:0;top:135px;width:774px;height:17px;background:#f3f4f4"></div><div style="position:absolute;left:0;top:169px;width:774px;height:17px;background:#f3f4f4"></div><div style="position:absolute;left:0;top:15px;width:790px;height:1px;background:#d8d8d8"></div><div style="position:absolute;left:788px;top:2px;width:1px;height:11px;background:#e4e4e4"></div><div style="position:absolute;left:103px;top:2px;width:1px;height:11px;background:#e4e4e4"></div><div style="position:absolute;left:103px;top:16px;width:1px;height:170px;background:#d2d2d2"></div><div style="position:absolute;left:559px;top:2px;width:1px;height:11px;background:#e4e4e4"></div><div style="position:absolute;left:559px;top:16px;width:1px;height:170px;background:#d2d2d2"></div><div style="position:absolute;left:617px;top:2px;width:1px;height:11px;background:#e4e4e4"></div><div style="position:absolute;left:617px;top:16px;width:1px;height:170px;background:#d2d2d2"></div><div style="position:absolute;left:774px;top:16px;width:16px;height:169px;background:#fafafa;border-left:1px solid #ececec"></div><div style="position:absolute;left:778px;top:19px;width:8px;height:82px;border-radius:4px;background:#c2c2c2"></div><div class="t" style="left:2.00px;top:2.09px;font-size:11px;line-height:11px;letter-spacing:0.333px">Name</div><div class="t" style="left:107.00px;top:2.09px;font-size:11px;line-height:11px;letter-spacing:0.158px">Type</div><div class="t" style="left:563.00px;top:2.09px;font-size:11px;line-height:11px;letter-spacing:0.217px">Array Size</div><div class="t" style="left:2.00px;top:18.49px;font-size:12.3px;line-height:12.3px;letter-spacing:0.112px">analyzer<span style="font-size:9.23px">_</span>version</div><div style="position:absolute;left:104px;top:0;width:455px;height:186px;overflow:hidden"><div class="t" style="left:107.00px;top:18.49px;font-size:12.3px;line-height:12.3px;letter-spacing:0.084px;left:3.00px">String, length = 32, padding = H5T<span style="font-size:9.23px">_</span>STR<span style="font-size:9.23px">_</span>NULLTERM, cset = H5T<span style="font-size:9.23px">_</span>CSET<span style="font-size:9.23px">_</span>ASCII</div></div><div class="t" style="left:562.00px;top:18.49px;font-size:12.3px;line-height:12.3px;letter-spacing:0.000px">1</div><div class="t" style="left:2.00px;top:35.49px;font-size:12.3px;line-height:12.3px;letter-spacing:0.454px">artist<span style="font-size:9.23px">_</span>7digitalid</div><div style="position:absolute;left:104px;top:0;width:455px;height:186px;overflow:hidden"><div class="t" style="left:107.00px;top:35.49px;font-size:12.3px;line-height:12.3px;letter-spacing:0.498px;left:3.00px">32-bit integer</div></div><div class="t" style="left:562.00px;top:35.49px;font-size:12.3px;line-height:12.3px;letter-spacing:0.000px">1</div><div class="t" style="left:2.00px;top:52.49px;font-size:12.3px;line-height:12.3px;letter-spacing:0.337px">artist<span style="font-size:9.23px">_</span>familiarity</div><div style="position:absolute;left:104px;top:0;width:455px;height:186px;overflow:hidden"><div class="t" style="left:107.00px;top:52.49px;font-size:12.3px;line-height:12.3px;letter-spacing:0.551px;left:3.00px">64-bit floating-point</div></div><div class="t" style="left:562.00px;top:52.49px;font-size:12.3px;line-height:12.3px;letter-spacing:0.000px">1</div><div class="t" style="left:2.00px;top:69.49px;font-size:12.3px;line-height:12.3px;letter-spacing:0.399px">artist<span style="font-size:9.23px">_</span>hotttnesss</div><div style="position:absolute;left:104px;top:0;width:455px;height:186px;overflow:hidden"><div class="t" style="left:107.00px;top:69.49px;font-size:12.3px;line-height:12.3px;letter-spacing:0.551px;left:3.00px">64-bit floating-point</div></div><div class="t" style="left:562.00px;top:69.49px;font-size:12.3px;line-height:12.3px;letter-spacing:0.000px">1</div><div class="t" style="left:2.00px;top:86.49px;font-size:12.3px;line-height:12.3px;letter-spacing:0.495px">artist<span style="font-size:9.23px">_</span>id</div><div style="position:absolute;left:104px;top:0;width:455px;height:186px;overflow:hidden"><div class="t" style="left:107.00px;top:86.49px;font-size:12.3px;line-height:12.3px;letter-spacing:0.084px;left:3.00px">String, length = 32, padding = H5T<span style="font-size:9.23px">_</span>STR<span style="font-size:9.23px">_</span>NULLTERM, cset = H5T<span style="font-size:9.23px">_</span>CSET<span style="font-size:9.23px">_</span>ASCII</div></div><div class="t" style="left:562.00px;top:86.49px;font-size:12.3px;line-height:12.3px;letter-spacing:0.000px">1</div><div class="t" style="left:2.00px;top:103.49px;font-size:12.3px;line-height:12.3px;letter-spacing:0.420px">artist<span style="font-size:9.23px">_</span>latitude</div><div style="position:absolute;left:104px;top:0;width:455px;height:186px;overflow:hidden"><div class="t" style="left:107.00px;top:103.49px;font-size:12.3px;line-height:12.3px;letter-spacing:0.551px;left:3.00px">64-bit floating-point</div></div><div class="t" style="left:562.00px;top:103.49px;font-size:12.3px;line-height:12.3px;letter-spacing:0.000px">1</div><div class="t" style="left:2.00px;top:120.49px;font-size:12.3px;line-height:12.3px;letter-spacing:0.385px">artist<span style="font-size:9.23px">_</span>location</div><div style="position:absolute;left:104px;top:0;width:455px;height:186px;overflow:hidden"><div class="t" style="left:107.00px;top:120.49px;font-size:12.3px;line-height:12.3px;letter-spacing:0.099px;left:3.00px">String, length = 1024, padding = H5T<span style="font-size:9.23px">_</span>STR<span style="font-size:9.23px">_</span>NULLTERM, cset = H5T<span style="font-size:9.23px">_</span>CSET<span style="font-size:9.23px">_</span>ASCII</div></div><div class="t" style="left:562.00px;top:120.49px;font-size:12.3px;line-height:12.3px;letter-spacing:0.000px">1</div><div class="t" style="left:2.00px;top:137.49px;font-size:12.3px;line-height:12.3px;letter-spacing:0.376px">artist<span style="font-size:9.23px">_</span>longitude</div><div style="position:absolute;left:104px;top:0;width:455px;height:186px;overflow:hidden"><div class="t" style="left:107.00px;top:137.49px;font-size:12.3px;line-height:12.3px;letter-spacing:0.551px;left:3.00px">64-bit floating-point</div></div><div class="t" style="left:562.00px;top:137.49px;font-size:12.3px;line-height:12.3px;letter-spacing:0.000px">1</div><div class="t" style="left:2.00px;top:154.49px;font-size:12.3px;line-height:12.3px;letter-spacing:0.443px">artist<span style="font-size:9.23px">_</span>mbid</div><div style="position:absolute;left:104px;top:0;width:455px;height:186px;overflow:hidden"><div class="t" style="left:107.00px;top:154.49px;font-size:12.3px;line-height:12.3px;letter-spacing:0.084px;left:3.00px">String, length = 40, padding = H5T<span style="font-size:9.23px">_</span>STR<span style="font-size:9.23px">_</span>NULLTERM, cset = H5T<span style="font-size:9.23px">_</span>CSET<span style="font-size:9.23px">_</span>ASCII</div></div><div class="t" style="left:562.00px;top:154.49px;font-size:12.3px;line-height:12.3px;letter-spacing:0.000px">1</div><div class="t" style="left:2.00px;top:171.49px;font-size:12.3px;line-height:12.3px;letter-spacing:0.306px">artist<span style="font-size:9.23px">_</span>name</div><div style="position:absolute;left:104px;top:0;width:455px;height:186px;overflow:hidden"><div class="t" style="left:107.00px;top:171.49px;font-size:12.3px;line-height:12.3px;letter-spacing:0.099px;left:3.00px">String, length = 1024, padding = H5T<span style="font-size:9.23px">_</span>STR<span style="font-size:9.23px">_</span>NULLTERM, cset = H5T<span style="font-size:9.23px">_</span>CSET<span style="font-size:9.23px">_</span>ASCII</div></div><div class="t" style="left:562.00px;top:171.49px;font-size:12.3px;line-height:12.3px;letter-spacing:0.000px">1</div></div><div class="t" style="left:575.00px;top:16.80px;font-size:13px;line-height:13px;letter-spacing:0.438px">Object Attribute Info</div><div class="t" style="left:721.00px;top:16.80px;font-size:13px;line-height:13px;letter-spacing:0.260px;color:#fff;-webkit-text-stroke:0.3px #fff">General Object Info</div><div class="t" style="left:307.00px;top:57.00px;font-size:13px;line-height:13px;letter-spacing:-0.256px">Name:</div><div class="t" style="left:407.00px;top:58.00px;font-size:13px;line-height:13px;letter-spacing:-0.244px">songs</div><div class="t" style="left:307.00px;top:83.00px;font-size:13px;line-height:13px;letter-spacing:-0.200px">Path:</div><div class="t" style="left:407.00px;top:84.00px;font-size:13px;line-height:13px;letter-spacing:-0.131px">/metadata/</div><div class="t" style="left:308.00px;top:109.00px;font-size:13px;line-height:13px;letter-spacing:-0.200px">Type:</div><div class="t" style="left:406.00px;top:110.00px;font-size:13px;line-height:13px;letter-spacing:-0.250px">HDF5 Dataset</div><div class="t" style="left:307.00px;top:135.00px;font-size:13px;line-height:13px;letter-spacing:-0.115px">Object Ref:</div><div class="t" style="left:406.00px;top:136.00px;font-size:13px;line-height:13px;letter-spacing:0.717px">2368</div><div class="t" style="left:319.00px;top:180.82px;font-size:12.5px;line-height:12.5px;letter-spacing:0.096px">Dataset Dataspace and Datatype</div><div class="t" style="left:320.00px;top:209.00px;font-size:13px;line-height:13px;letter-spacing:-0.078px">No. of Dimension(s):</div><div class="t" style="left:468.00px;top:210.00px;font-size:13px;line-height:13px;letter-spacing:-0.100px">1</div><div class="t" style="left:320.00px;top:235.00px;font-size:13px;line-height:13px;letter-spacing:-0.163px">Dimension Size(s):</div><div class="t" style="left:468.00px;top:236.00px;font-size:13px;line-height:13px;letter-spacing:-0.100px">1</div><div class="t" style="left:320.00px;top:261.00px;font-size:13px;line-height:13px;letter-spacing:-0.177px">Max Dimension Size(s):</div><div class="t" style="left:468.00px;top:262.00px;font-size:13px;line-height:13px;letter-spacing:-0.084px">Unlimited</div><div class="t" style="left:320.00px;top:287.00px;font-size:13px;line-height:13px;letter-spacing:-0.150px">Data Type:</div><div class="t" style="left:468.00px;top:288.00px;font-size:13px;line-height:13px;letter-spacing:-0.332px">Compound</div><div class="t" style="left:635.00px;top:316.00px;font-size:13px;line-height:13px;letter-spacing:0.323px">Show Data with Options</div><div class="t" style="left:319.00px;top:383.32px;font-size:12.5px;line-height:12.5px;letter-spacing:0.116px">Miscellaneous Dataset Information</div><div class="t" style="left:320.00px;top:409.00px;font-size:13px;line-height:13px;letter-spacing:-0.143px">Storage Layout:</div><div class="t" style="left:423.00px;top:409.00px;font-size:13px;line-height:13px;letter-spacing:-0.600px">CHUNKED: 3</div><div class="t" style="left:320.00px;top:430.00px;font-size:13px;line-height:13px;letter-spacing:-0.152px">Compression:</div><div class="t" style="left:422.00px;top:430.00px;font-size:13px;line-height:13px;letter-spacing:-0.040px">12.518:1GZIP: level = 1</div><div class="t" style="left:320.00px;top:451.00px;font-size:13px;line-height:13px;letter-spacing:0.004px">Filters:</div><div class="t" style="left:423.00px;top:451.00px;font-size:13px;line-height:13px;letter-spacing:-0.284px">SHUFFLE: Nbytes = 5320, GZIP</div><div class="t" style="left:320.00px;top:472.00px;font-size:13px;line-height:13px;letter-spacing:-0.011px">Storage:</div><div class="t" style="left:423.00px;top:472.00px;font-size:13px;line-height:13px;letter-spacing:-0.080px">SIZE: 425, allocation time: Incremental</div><div class="t" style="left:320.00px;top:493.00px;font-size:13px;line-height:13px;letter-spacing:-0.085px">Fill value:</div><div class="t" style="left:422.00px;top:493.00px;font-size:13px;line-height:13px;letter-spacing:-0.800px">NONE</div><div class="t" style="left:319.00px;top:548.32px;font-size:12.5px;line-height:12.5px;letter-spacing:0.085px">Compound Dataset Members</div>
</body></html>
